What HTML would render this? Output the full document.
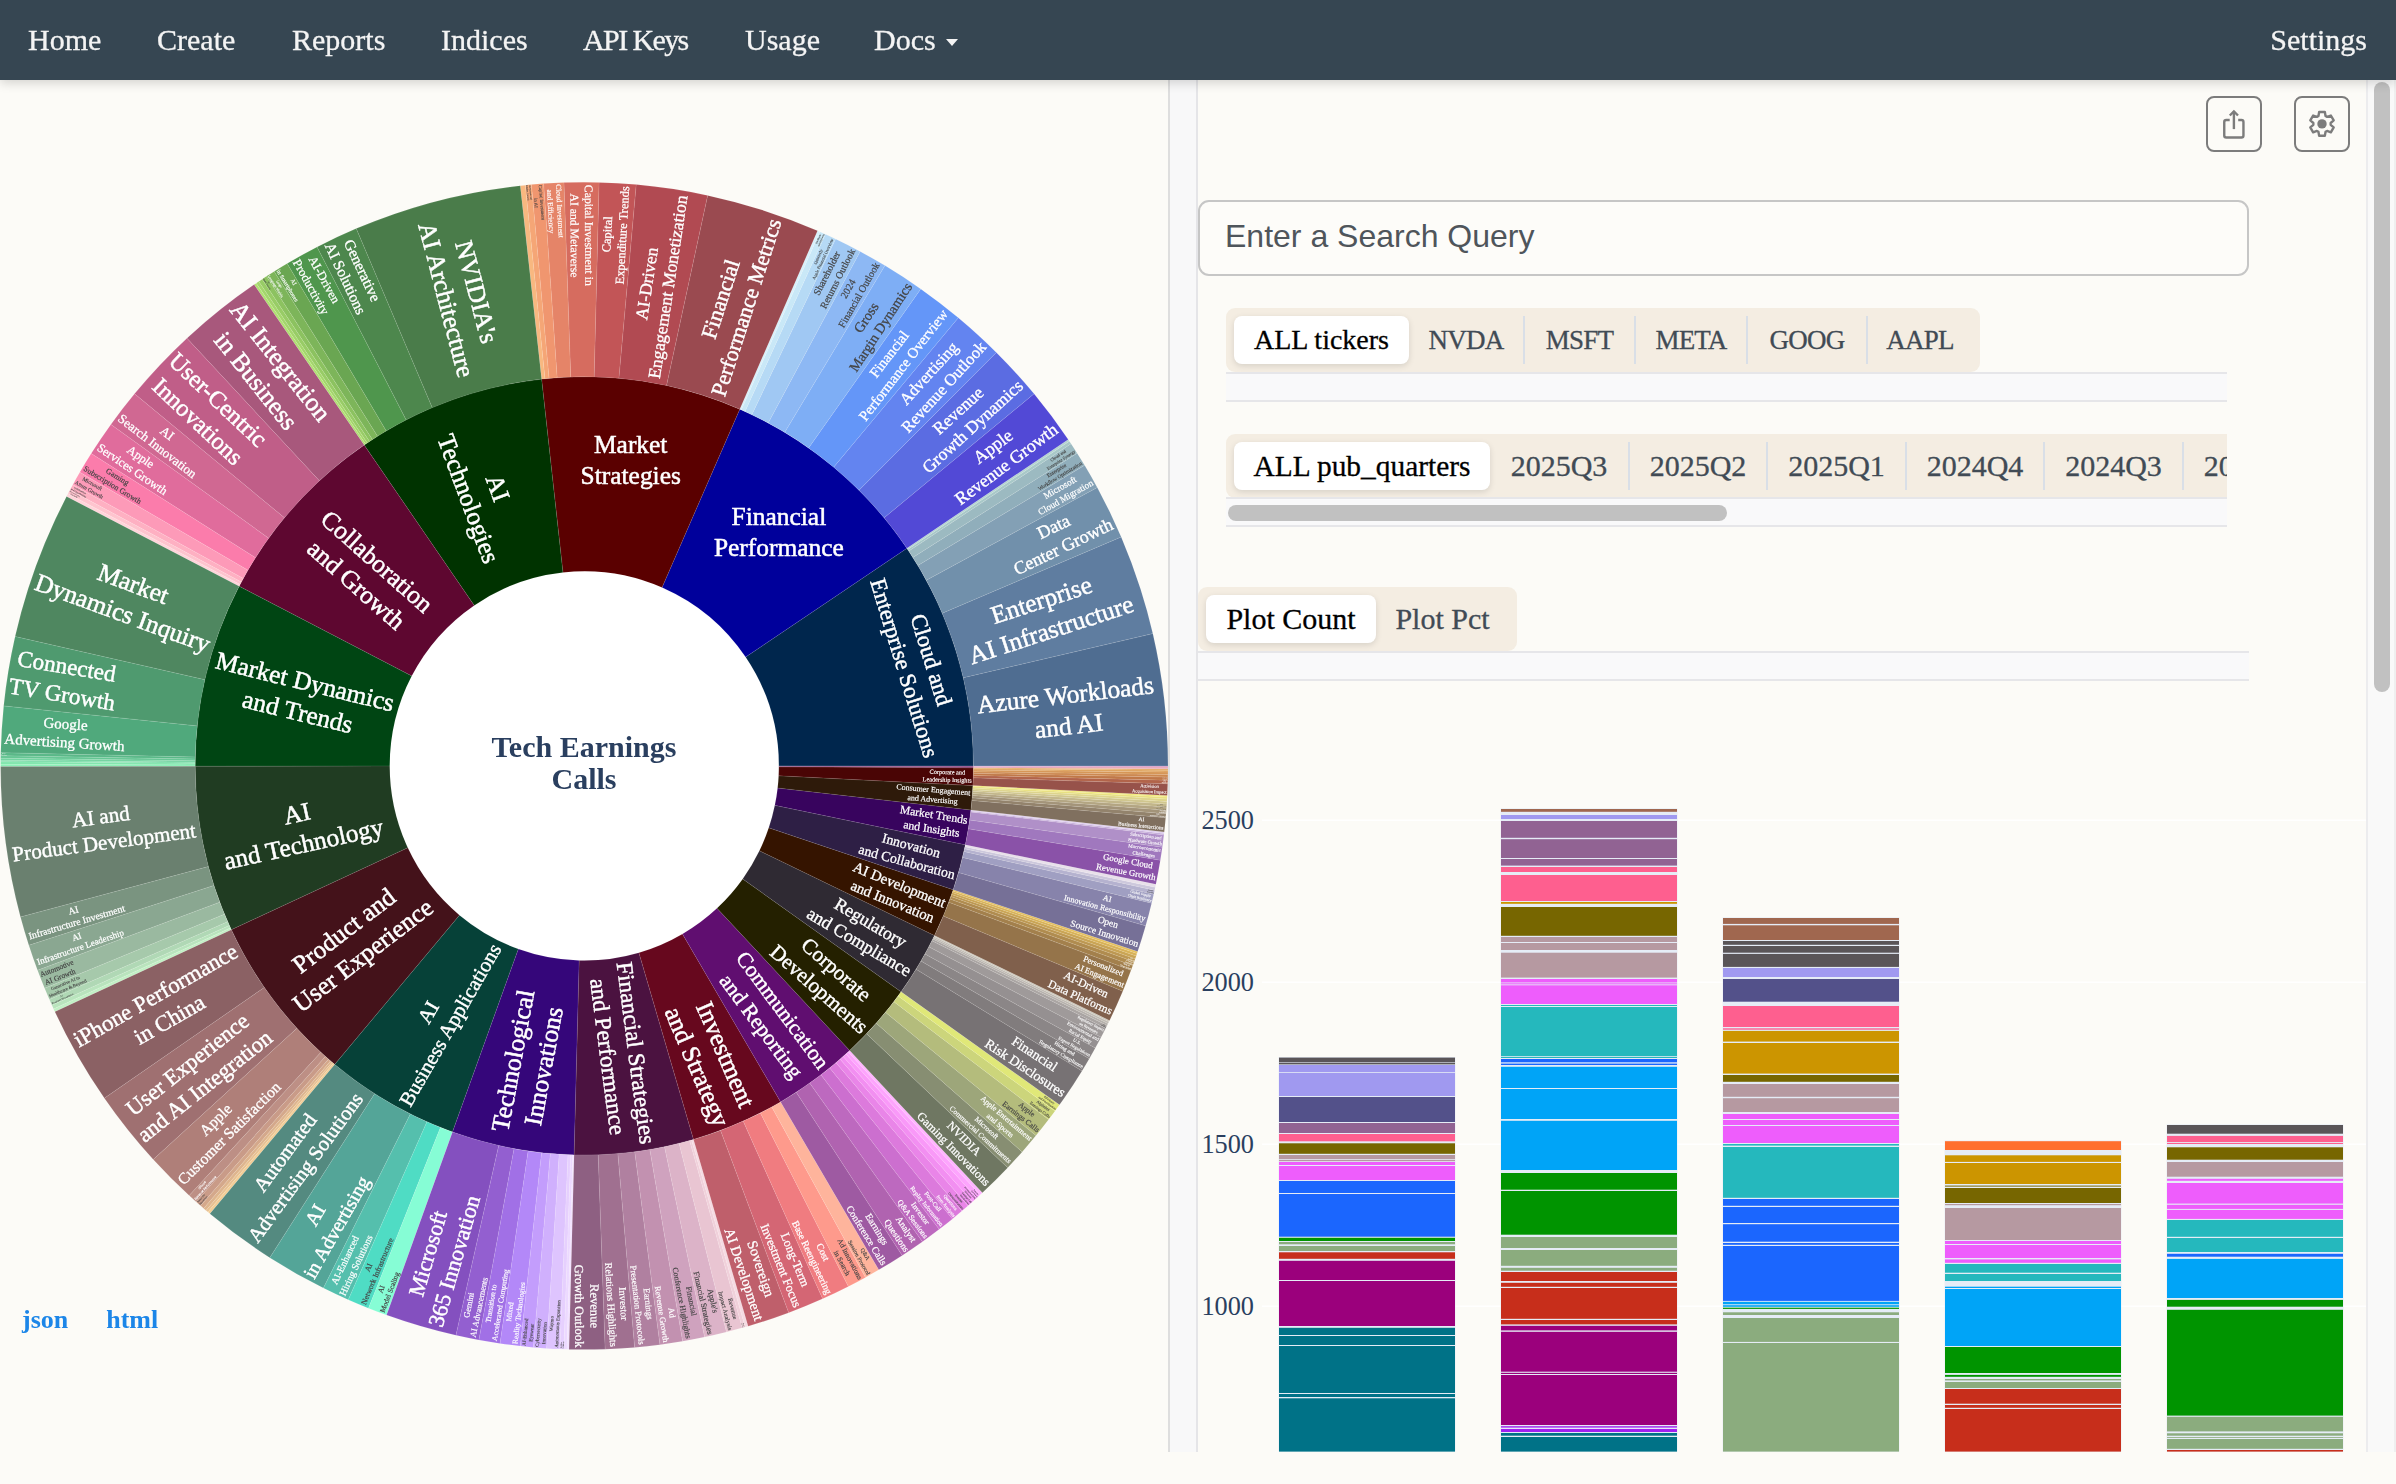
<!DOCTYPE html>
<html lang="en">
<head>
<meta charset="utf-8">
<title>Tech Earnings Calls</title>
<style>
*{box-sizing:border-box}
html,body{margin:0;padding:0}
body{width:2396px;height:1484px;overflow:hidden;background:#fcfbf7;font-family:"Liberation Serif",serif;position:relative;color:#111}
.nav{position:absolute;left:0;top:0;width:2396px;height:80px;background:#364652;box-shadow:0 3px 10px rgba(0,0,0,.16);z-index:5}
.nav a{-webkit-text-stroke:0.3px #f4f4f4;position:absolute;top:0;line-height:80px;font-size:30px;color:#f4f4f4;text-decoration:none;white-space:nowrap}
.caret{position:absolute;left:946px;top:39px;width:0;height:0;border-left:6.5px solid transparent;border-right:6.5px solid transparent;border-top:7px solid #f4f4f4}
.main{position:absolute;left:0;top:80px;width:2396px;height:1372px;overflow:hidden}
.sun{position:absolute;left:0;top:0;will-change:transform}
.vl{position:absolute;top:0;height:1372px}
.links{position:absolute;left:22px;top:1224.5px;font-size:26px;font-weight:bold}
.links span{color:#1c86e8;margin-right:38px}
.btn{position:absolute;top:16px;width:56px;height:56px;border:2px solid #7c7c7c;border-radius:8px;background:#fcfbf7}
.btn svg{position:absolute;left:0;top:0}
.search{position:absolute;left:1198px;top:120px;width:1051px;height:76px;border:2px solid #c6c6c6;border-radius:11px;background:#fdfcf9;font-family:"Liberation Sans",sans-serif;font-size:32px;color:#4f555b;line-height:68px;padding-left:25px}
.tabs{position:absolute;height:64px;background:#f4ede2;border-radius:9px 9px 9px 9px;overflow:hidden;white-space:nowrap}
.tab{-webkit-text-stroke:0.3px;position:absolute;top:8px;height:48px;line-height:48px;font-size:28px;color:#414b55;text-align:center}
.tab.sel{background:#fff;border-radius:8px;color:#000;box-shadow:0 2px 6px rgba(0,0,0,.12)}
.tab.sep{border-left:2px solid #d9dfe7}
.hl{position:absolute;height:2px;background:#e6e6e9}
.band{position:absolute;background:#f9f9fa}
.bars{position:absolute;left:1198px;top:672px}
.thumb{position:absolute;background:#c1c1c1;border-radius:8px}
</style>
</head>
<body>
<div class="nav">
  <a style="left:28px">Home</a>
  <a style="left:157px">Create</a>
  <a style="left:292px">Reports</a>
  <a style="left:441px">Indices</a>
  <a style="left:583px;letter-spacing:-1.6px">API Keys</a>
  <a style="left:745px">Usage</a>
  <a style="left:874px">Docs</a><i class="caret"></i>
  <a style="right:29px">Settings</a>
</div>
<div class="main">
<svg class="sun" width="1180" height="1372" viewBox="0 80 1180 1372">
<circle cx="584.3" cy="765.9" r="195.07" fill="#ffffff"/>
<g stroke="#ffffff" stroke-opacity="0.16" stroke-width="0.5"><path d="M973.43,765.90A389.13,389.13 0 0 0 906.91,548.30L745.60,657.10A194.57,194.57 0 0 1 778.87,765.90Z" fill="#00264d"/><path d="M1168.00,765.90A583.70,583.70 0 0 0 1152.81,633.60L963.31,677.70A389.13,389.13 0 0 1 973.43,765.90Z" fill="#4f6d91"/><path d="M1152.81,633.60A583.70,583.70 0 0 0 1121.20,536.89L942.23,613.23A389.13,389.13 0 0 1 963.31,677.70Z" fill="#5f7da0"/><path d="M1121.20,536.89A583.70,583.70 0 0 0 1097.27,487.38L926.28,580.22A389.13,389.13 0 0 1 942.23,613.23Z" fill="#7190ab"/><path d="M1097.27,487.38A583.70,583.70 0 0 0 1084.63,465.27L917.85,565.48A389.13,389.13 0 0 1 926.28,580.22Z" fill="#83a0b5"/><path d="M1084.63,465.27A583.70,583.70 0 0 0 1077.13,453.14L912.86,557.39A389.13,389.13 0 0 1 917.85,565.48Z" fill="#90aebb"/><path d="M1077.13,453.14A583.70,583.70 0 0 0 1071.04,443.73L908.79,551.12A389.13,389.13 0 0 1 912.86,557.39Z" fill="#9cbac1"/><path d="M1071.04,443.73A583.70,583.70 0 0 0 1069.35,441.19L907.66,549.43A389.13,389.13 0 0 1 908.79,551.12Z" fill="#a8c8c8"/><path d="M1069.35,441.19A583.70,583.70 0 0 0 1068.21,439.50L906.91,548.30A389.13,389.13 0 0 1 907.66,549.43Z" fill="#b5d5d0"/><path d="M906.91,548.30A389.13,389.13 0 0 0 739.78,409.18L662.04,587.54A194.57,194.57 0 0 1 745.60,657.10Z" fill="#00009b"/><path d="M1068.21,439.50A583.70,583.70 0 0 0 1034.05,393.84L884.13,517.86A389.13,389.13 0 0 1 906.91,548.30Z" fill="#5249d6"/><path d="M1034.05,393.84A583.70,583.70 0 0 0 996.32,352.44L858.98,490.26A389.13,389.13 0 0 1 884.13,517.86Z" fill="#5b6ce2"/><path d="M996.32,352.44A583.70,583.70 0 0 0 958.32,317.78L833.65,467.15A389.13,389.13 0 0 1 858.98,490.26Z" fill="#6384f0"/><path d="M958.32,317.78A583.70,583.70 0 0 0 920.76,288.93L808.61,447.92A389.13,389.13 0 0 1 833.65,467.15Z" fill="#6496f8"/><path d="M920.76,288.93A583.70,583.70 0 0 0 884.93,265.57L784.72,432.35A389.13,389.13 0 0 1 808.61,447.92Z" fill="#7eaef5"/><path d="M884.93,265.57A583.70,583.70 0 0 0 860.13,251.48L768.19,422.96A389.13,389.13 0 0 1 784.72,432.35Z" fill="#8db8f4"/><path d="M860.13,251.48A583.70,583.70 0 0 0 835.59,239.06L751.83,414.67A389.13,389.13 0 0 1 768.19,422.96Z" fill="#a0c8f3"/><path d="M835.59,239.06A583.70,583.70 0 0 0 825.43,234.33L745.05,411.52A389.13,389.13 0 0 1 751.83,414.67Z" fill="#b6daf5"/><path d="M825.43,234.33A583.70,583.70 0 0 0 819.85,231.84L741.33,409.86A389.13,389.13 0 0 1 745.05,411.52Z" fill="#c9e8f7"/><path d="M819.85,231.84A583.70,583.70 0 0 0 817.52,230.82L739.78,409.18A389.13,389.13 0 0 1 741.33,409.86Z" fill="#d8f0fa"/><path d="M739.78,409.18A389.13,389.13 0 0 0 541.60,379.12L562.95,572.51A194.57,194.57 0 0 1 662.04,587.54Z" fill="#5a0000"/><path d="M817.52,230.82A583.70,583.70 0 0 0 707.65,195.38L666.53,385.55A389.13,389.13 0 0 1 739.78,409.18Z" fill="#9a4a50"/><path d="M707.65,195.38A583.70,583.70 0 0 0 636.19,184.51L618.89,378.31A389.13,389.13 0 0 1 666.53,385.55Z" fill="#b14a52"/><path d="M636.19,184.51A583.70,583.70 0 0 0 599.07,182.39L594.15,376.89A389.13,389.13 0 0 1 618.89,378.31Z" fill="#c25557"/><path d="M599.07,182.39A583.70,583.70 0 0 0 563.93,182.56L570.72,377.00A389.13,389.13 0 0 1 594.15,376.89Z" fill="#d66c5f"/><path d="M563.93,182.56A583.70,583.70 0 0 0 543.58,183.62L557.16,377.71A389.13,389.13 0 0 1 570.72,377.00Z" fill="#e58468"/><path d="M543.58,183.62A583.70,583.70 0 0 0 531.40,184.60L549.03,378.37A389.13,389.13 0 0 1 557.16,377.71Z" fill="#f0966f"/><path d="M531.40,184.60A583.70,583.70 0 0 0 525.31,185.19L544.98,378.76A389.13,389.13 0 0 1 549.03,378.37Z" fill="#f5a676"/><path d="M525.31,185.19A583.70,583.70 0 0 0 520.25,185.72L541.60,379.12A389.13,389.13 0 0 1 544.98,378.76Z" fill="#f8b880"/><path d="M541.60,379.12A389.13,389.13 0 0 0 364.17,445.01L474.24,605.46A194.57,194.57 0 0 1 562.95,572.51Z" fill="#003300"/><path d="M520.25,185.72A583.70,583.70 0 0 0 356.23,228.60L432.25,407.70A389.13,389.13 0 0 1 541.60,379.12Z" fill="#4a7c4a"/><path d="M356.23,228.60A583.70,583.70 0 0 0 317.04,246.98L406.13,419.95A389.13,389.13 0 0 1 432.25,407.70Z" fill="#4d874d"/><path d="M317.04,246.98A583.70,583.70 0 0 0 287.17,263.48L386.22,430.96A389.13,389.13 0 0 1 406.13,419.95Z" fill="#4f964d"/><path d="M287.17,263.48A583.70,583.70 0 0 0 274.12,271.43L377.52,436.26A389.13,389.13 0 0 1 386.22,430.96Z" fill="#6aa652"/><path d="M274.12,271.43A583.70,583.70 0 0 0 266.39,276.37L372.36,439.55A389.13,389.13 0 0 1 377.52,436.26Z" fill="#7db55a"/><path d="M266.39,276.37A583.70,583.70 0 0 0 262.13,279.16L369.52,441.41A389.13,389.13 0 0 1 372.36,439.55Z" fill="#8cc260"/><path d="M262.13,279.16A583.70,583.70 0 0 0 258.74,281.42L367.26,442.91A389.13,389.13 0 0 1 369.52,441.41Z" fill="#98cc66"/><path d="M258.74,281.42A583.70,583.70 0 0 0 256.21,283.13L365.57,444.06A389.13,389.13 0 0 1 367.26,442.91Z" fill="#a4d66c"/><path d="M256.21,283.13A583.70,583.70 0 0 0 254.11,284.57L364.17,445.01A389.13,389.13 0 0 1 365.57,444.06Z" fill="#b0e072"/><path d="M364.17,445.01A389.13,389.13 0 0 0 239.13,586.22L411.72,676.06A194.57,194.57 0 0 1 474.24,605.46Z" fill="#5e0730"/><path d="M254.11,284.57A583.70,583.70 0 0 0 186.96,338.31L319.41,480.84A389.13,389.13 0 0 1 364.17,445.01Z" fill="#a8587c"/><path d="M186.96,338.31A583.70,583.70 0 0 0 134.55,393.84L284.47,517.86A389.13,389.13 0 0 1 319.41,480.84Z" fill="#c05e88"/><path d="M134.55,393.84A583.70,583.70 0 0 0 110.88,424.46L268.69,538.27A389.13,389.13 0 0 1 284.47,517.86Z" fill="#d06892"/><path d="M110.88,424.46A583.70,583.70 0 0 0 91.19,453.57L255.56,557.68A389.13,389.13 0 0 1 268.69,538.27Z" fill="#e06c9c"/><path d="M91.19,453.57A583.70,583.70 0 0 0 79.82,472.29L247.98,570.16A389.13,389.13 0 0 1 255.56,557.68Z" fill="#fb7cab"/><path d="M79.82,472.29A583.70,583.70 0 0 0 72.80,484.70L243.30,578.43A389.13,389.13 0 0 1 247.98,570.16Z" fill="#fd9ab8"/><path d="M72.80,484.70A583.70,583.70 0 0 0 69.88,490.07L241.36,582.01A389.13,389.13 0 0 1 243.30,578.43Z" fill="#feb0c2"/><path d="M69.88,490.07A583.70,583.70 0 0 0 67.97,493.67L240.08,584.41A389.13,389.13 0 0 1 241.36,582.01Z" fill="#fec4ce"/><path d="M67.97,493.67A583.70,583.70 0 0 0 66.55,496.38L239.13,586.22A389.13,389.13 0 0 1 240.08,584.41Z" fill="#ffd4da"/><path d="M239.13,586.22A389.13,389.13 0 0 0 195.17,766.24L389.73,766.07A194.57,194.57 0 0 1 411.72,676.06Z" fill="#004513"/><path d="M66.55,496.38A583.70,583.70 0 0 0 15.11,636.58L204.84,679.69A389.13,389.13 0 0 1 239.13,586.22Z" fill="#4f8760"/><path d="M15.11,636.58A583.70,583.70 0 0 0 3.69,705.90L197.23,725.90A389.13,389.13 0 0 1 204.84,679.69Z" fill="#4f9a6f"/><path d="M3.69,705.90A583.70,583.70 0 0 0 0.75,752.66L195.27,757.07A389.13,389.13 0 0 1 197.23,725.90Z" fill="#50a97c"/><path d="M0.75,752.66A583.70,583.70 0 0 0 0.69,755.71L195.23,759.11A389.13,389.13 0 0 1 195.27,757.07Z" fill="#5ab888"/><path d="M0.69,755.71A583.70,583.70 0 0 0 0.65,758.26L195.20,760.81A389.13,389.13 0 0 1 195.23,759.11Z" fill="#66c694"/><path d="M0.65,758.26A583.70,583.70 0 0 0 0.63,760.30L195.18,762.16A389.13,389.13 0 0 1 195.20,760.81Z" fill="#72d4a0"/><path d="M0.63,760.30A583.70,583.70 0 0 0 0.61,761.83L195.18,763.18A389.13,389.13 0 0 1 195.18,762.16Z" fill="#7adca8"/><path d="M0.61,761.83A583.70,583.70 0 0 0 0.60,764.37L195.17,764.88A389.13,389.13 0 0 1 195.18,763.18Z" fill="#82e6ae"/><path d="M0.60,764.37A583.70,583.70 0 0 0 0.60,766.41L195.17,766.24A389.13,389.13 0 0 1 195.17,764.88Z" fill="#8af0b6"/><path d="M195.17,766.24A389.13,389.13 0 0 0 231.34,929.74L407.82,847.82A194.57,194.57 0 0 1 389.73,766.07Z" fill="#203c22"/><path d="M0.60,766.41A583.70,583.70 0 0 0 20.49,916.97L208.43,866.62A389.13,389.13 0 0 1 195.17,766.24Z" fill="#6a806f"/><path d="M20.49,916.97A583.70,583.70 0 0 0 28.85,945.30L214.00,885.50A389.13,389.13 0 0 1 208.43,866.62Z" fill="#7a9480"/><path d="M28.85,945.30A583.70,583.70 0 0 0 37.56,970.32L219.81,902.18A389.13,389.13 0 0 1 214.00,885.50Z" fill="#8aa791"/><path d="M37.56,970.32A583.70,583.70 0 0 0 44.64,988.33L224.53,914.19A389.13,389.13 0 0 1 219.81,902.18Z" fill="#9ab9a0"/><path d="M44.64,988.33A583.70,583.70 0 0 0 49.42,999.58L227.71,921.69A389.13,389.13 0 0 1 224.53,914.19Z" fill="#a6c9ab"/><path d="M49.42,999.58A583.70,583.70 0 0 0 51.90,1005.17L229.36,925.41A389.13,389.13 0 0 1 227.71,921.69Z" fill="#b0d8b5"/><path d="M51.90,1005.17A583.70,583.70 0 0 0 53.58,1008.88L230.49,927.89A389.13,389.13 0 0 1 229.36,925.41Z" fill="#b9e4bd"/><path d="M53.58,1008.88A583.70,583.70 0 0 0 54.86,1011.66L231.34,929.74A389.13,389.13 0 0 1 230.49,927.89Z" fill="#c2f0c5"/><path d="M231.34,929.74A389.13,389.13 0 0 0 334.69,1064.43L459.50,915.16A194.57,194.57 0 0 1 407.82,847.82Z" fill="#44121a"/><path d="M54.86,1011.66A583.70,583.70 0 0 0 104.41,1098.19L264.38,987.43A389.13,389.13 0 0 1 231.34,929.74Z" fill="#8b6164"/><path d="M104.41,1098.19A583.70,583.70 0 0 0 153.26,1159.49L296.94,1028.29A389.13,389.13 0 0 1 264.38,987.43Z" fill="#9f7071"/><path d="M153.26,1159.49A583.70,583.70 0 0 0 189.21,1195.56L320.90,1052.34A389.13,389.13 0 0 1 296.94,1028.29Z" fill="#af7f79"/><path d="M189.21,1195.56A583.70,583.70 0 0 0 196.01,1201.71L325.44,1056.44A389.13,389.13 0 0 1 320.90,1052.34Z" fill="#bd8f85"/><path d="M196.01,1201.71A583.70,583.70 0 0 0 200.59,1205.75L328.49,1059.14A389.13,389.13 0 0 1 325.44,1056.44Z" fill="#c99b88"/><path d="M200.59,1205.75A583.70,583.70 0 0 0 203.67,1208.42L330.55,1060.92A389.13,389.13 0 0 1 328.49,1059.14Z" fill="#d4a88b"/><path d="M203.67,1208.42A583.70,583.70 0 0 0 205.99,1210.41L332.09,1062.24A389.13,389.13 0 0 1 330.55,1060.92Z" fill="#deb58e"/><path d="M205.99,1210.41A583.70,583.70 0 0 0 207.94,1212.06L333.39,1063.34A389.13,389.13 0 0 1 332.09,1062.24Z" fill="#e8c192"/><path d="M207.94,1212.06A583.70,583.70 0 0 0 209.89,1213.69L334.69,1064.43A389.13,389.13 0 0 1 333.39,1063.34Z" fill="#f2cd96"/><path d="M334.69,1064.43A389.13,389.13 0 0 0 452.49,1132.03L518.39,948.96A194.57,194.57 0 0 1 459.50,915.16Z" fill="#064138"/><path d="M209.89,1213.69A583.70,583.70 0 0 0 269.82,1257.64L374.65,1093.73A389.13,389.13 0 0 1 334.69,1064.43Z" fill="#548a80"/><path d="M269.82,1257.64A583.70,583.70 0 0 0 323.40,1288.05L410.37,1114.00A389.13,389.13 0 0 1 374.65,1093.73Z" fill="#54a598"/><path d="M323.40,1288.05A583.70,583.70 0 0 0 348.28,1299.76L426.96,1121.80A389.13,389.13 0 0 1 410.37,1114.00Z" fill="#55bfad"/><path d="M348.28,1299.76A583.70,583.70 0 0 0 368.48,1308.23L440.42,1127.46A389.13,389.13 0 0 1 426.96,1121.80Z" fill="#4fdcc4"/><path d="M368.48,1308.23A583.70,583.70 0 0 0 386.58,1315.09L452.49,1132.03A389.13,389.13 0 0 1 440.42,1127.46Z" fill="#86fdd5"/><path d="M452.49,1132.03A389.13,389.13 0 0 0 574.11,1154.90L579.21,960.40A194.57,194.57 0 0 1 518.39,948.96Z" fill="#35067a"/><path d="M386.58,1315.09A583.70,583.70 0 0 0 455.98,1335.32L498.75,1145.51A389.13,389.13 0 0 1 452.49,1132.03Z" fill="#8450bf"/><path d="M455.98,1335.32A583.70,583.70 0 0 0 478.93,1340.01L514.05,1148.64A389.13,389.13 0 0 1 498.75,1145.51Z" fill="#935fd0"/><path d="M478.93,1340.01A583.70,583.70 0 0 0 500.04,1343.49L528.13,1150.96A389.13,389.13 0 0 1 514.05,1148.64Z" fill="#a170e6"/><path d="M500.04,1343.49A583.70,583.70 0 0 0 520.25,1346.08L541.60,1152.68A389.13,389.13 0 0 1 528.13,1150.96Z" fill="#b388f8"/><path d="M520.25,1346.08A583.70,583.70 0 0 0 533.43,1347.38L550.38,1153.55A389.13,389.13 0 0 1 541.60,1152.68Z" fill="#c39dfc"/><path d="M533.43,1347.38A583.70,583.70 0 0 0 546.63,1348.38L559.19,1154.22A389.13,389.13 0 0 1 550.38,1153.55Z" fill="#d0b0fd"/><path d="M546.63,1348.38A583.70,583.70 0 0 0 559.86,1349.09L568.00,1154.69A389.13,389.13 0 0 1 559.19,1154.22Z" fill="#dec4fe"/><path d="M559.86,1349.09A583.70,583.70 0 0 0 563.93,1349.24L570.72,1154.80A389.13,389.13 0 0 1 568.00,1154.69Z" fill="#e6d0fe"/><path d="M563.93,1349.24A583.70,583.70 0 0 0 566.98,1349.34L572.76,1154.86A389.13,389.13 0 0 1 570.72,1154.80Z" fill="#ecd9ff"/><path d="M566.98,1349.34A583.70,583.70 0 0 0 569.02,1349.40L574.11,1154.90A389.13,389.13 0 0 1 572.76,1154.86Z" fill="#f2e2ff"/><path d="M574.11,1154.90A389.13,389.13 0 0 0 693.52,1139.39L638.91,952.65A194.57,194.57 0 0 1 579.21,960.40Z" fill="#4b1240"/><path d="M569.02,1349.40A583.70,583.70 0 0 0 605.18,1349.23L598.22,1154.78A389.13,389.13 0 0 1 574.11,1154.90Z" fill="#8e6082"/><path d="M605.18,1349.23A583.70,583.70 0 0 0 634.67,1347.42L617.88,1153.58A389.13,389.13 0 0 1 598.22,1154.78Z" fill="#a07090"/><path d="M634.67,1347.42A583.70,583.70 0 0 0 659.98,1344.67L634.76,1151.75A389.13,389.13 0 0 1 617.88,1153.58Z" fill="#b080a0"/><path d="M659.98,1344.67A583.70,583.70 0 0 0 682.65,1341.26L649.86,1149.47A389.13,389.13 0 0 1 634.76,1151.75Z" fill="#c291b0"/><path d="M682.65,1341.26A583.70,583.70 0 0 0 704.66,1337.06L664.54,1146.67A389.13,389.13 0 0 1 649.86,1149.47Z" fill="#cfa2be"/><path d="M704.66,1337.06A583.70,583.70 0 0 0 726.50,1332.01L679.10,1143.31A389.13,389.13 0 0 1 664.54,1146.67Z" fill="#dcb3c8"/><path d="M726.50,1332.01A583.70,583.70 0 0 0 742.25,1327.82L689.60,1140.52A389.13,389.13 0 0 1 679.10,1143.31Z" fill="#e9c5d2"/><path d="M742.25,1327.82A583.70,583.70 0 0 0 745.19,1326.99L691.56,1139.96A389.13,389.13 0 0 1 689.60,1140.52Z" fill="#f0d0da"/><path d="M745.19,1326.99A583.70,583.70 0 0 0 748.13,1326.14L693.52,1139.39A389.13,389.13 0 0 1 691.56,1139.96Z" fill="#f5dae2"/><path d="M693.52,1139.39A389.13,389.13 0 0 0 780.63,1101.88L682.46,933.89A194.57,194.57 0 0 1 638.91,952.65Z" fill="#67081e"/><path d="M748.13,1326.14A583.70,583.70 0 0 0 788.72,1312.64L720.58,1130.39A389.13,389.13 0 0 1 693.52,1139.39Z" fill="#bf5f6b"/><path d="M788.72,1312.64A583.70,583.70 0 0 0 822.64,1298.72L743.19,1121.11A389.13,389.13 0 0 1 720.58,1130.39Z" fill="#d46674"/><path d="M822.64,1298.72A583.70,583.70 0 0 0 848.39,1286.44L760.36,1112.93A389.13,389.13 0 0 1 743.19,1121.11Z" fill="#f07c80"/><path d="M848.39,1286.44A583.70,583.70 0 0 0 865.50,1277.40L771.77,1106.90A389.13,389.13 0 0 1 760.36,1112.93Z" fill="#fe9a8c"/><path d="M865.50,1277.40A583.70,583.70 0 0 0 878.79,1269.86L780.63,1101.88A389.13,389.13 0 0 1 771.77,1106.90Z" fill="#feb49c"/><path d="M780.63,1101.88A389.13,389.13 0 0 0 849.69,1050.49L716.99,908.20A194.57,194.57 0 0 1 682.46,933.89Z" fill="#600e70"/><path d="M878.79,1269.86A583.70,583.70 0 0 0 902.21,1255.43L796.24,1092.25A389.13,389.13 0 0 1 780.63,1101.88Z" fill="#9e5aa2"/><path d="M902.21,1255.43A583.70,583.70 0 0 0 922.43,1241.69L809.72,1083.09A389.13,389.13 0 0 1 796.24,1092.25Z" fill="#b063b0"/><path d="M922.43,1241.69A583.70,583.70 0 0 0 939.23,1229.29L820.92,1074.83A389.13,389.13 0 0 1 809.72,1083.09Z" fill="#bd69bf"/><path d="M939.23,1229.29A583.70,583.70 0 0 0 952.43,1218.88L829.72,1067.89A389.13,389.13 0 0 1 820.92,1074.83Z" fill="#cc6fcf"/><path d="M952.43,1218.88A583.70,583.70 0 0 0 961.83,1211.07L835.99,1062.68A389.13,389.13 0 0 1 829.72,1067.89Z" fill="#dc7adc"/><path d="M961.83,1211.07A583.70,583.70 0 0 0 968.01,1205.75L840.11,1059.14A389.13,389.13 0 0 1 835.99,1062.68Z" fill="#e985e8"/><path d="M968.01,1205.75A583.70,583.70 0 0 0 972.59,1201.71L843.16,1056.44A389.13,389.13 0 0 1 840.11,1059.14Z" fill="#f28ff1"/><path d="M972.59,1201.71A583.70,583.70 0 0 0 976.76,1197.97L845.94,1053.94A389.13,389.13 0 0 1 843.16,1056.44Z" fill="#f999f8"/><path d="M976.76,1197.97A583.70,583.70 0 0 0 980.14,1194.87L848.19,1051.88A389.13,389.13 0 0 1 845.94,1053.94Z" fill="#fda4fd"/><path d="M980.14,1194.87A583.70,583.70 0 0 0 982.38,1192.79L849.69,1050.49A389.13,389.13 0 0 1 848.19,1051.88Z" fill="#ffb4ff"/><path d="M849.69,1050.49A389.13,389.13 0 0 0 901.10,991.87L742.70,878.89A194.57,194.57 0 0 1 716.99,908.20Z" fill="#242000"/><path d="M982.38,1192.79A583.70,583.70 0 0 0 1007.70,1167.69L866.57,1033.76A389.13,389.13 0 0 1 849.69,1050.49Z" fill="#6f7762"/><path d="M1007.70,1167.69A583.70,583.70 0 0 0 1022.14,1151.91L876.19,1023.24A389.13,389.13 0 0 1 866.57,1033.76Z" fill="#878e72"/><path d="M1022.14,1151.91A583.70,583.70 0 0 0 1035.99,1135.60L885.43,1012.37A389.13,389.13 0 0 1 876.19,1023.24Z" fill="#9da67a"/><path d="M1035.99,1135.60A583.70,583.70 0 0 0 1048.62,1119.62L893.85,1001.71A389.13,389.13 0 0 1 885.43,1012.37Z" fill="#b4bc7c"/><path d="M1048.62,1119.62A583.70,583.70 0 0 0 1055.02,1111.05L898.11,996.00A389.13,389.13 0 0 1 893.85,1001.71Z" fill="#ccd57b"/><path d="M1055.02,1111.05A583.70,583.70 0 0 0 1059.50,1104.86L901.10,991.87A389.13,389.13 0 0 1 898.11,996.00Z" fill="#e0e878"/><path d="M901.10,991.87A389.13,389.13 0 0 0 934.50,935.57L759.40,850.73A194.57,194.57 0 0 1 742.70,878.89Z" fill="#2f2a33"/><path d="M1059.50,1104.86A583.70,583.70 0 0 0 1081.99,1070.88L916.09,969.22A389.13,389.13 0 0 1 901.10,991.87Z" fill="#777274"/><path d="M1081.99,1070.88A583.70,583.70 0 0 0 1089.29,1058.63L920.96,961.05A389.13,389.13 0 0 1 916.09,969.22Z" fill="#817c7d"/><path d="M1089.29,1058.63A583.70,583.70 0 0 0 1095.31,1047.99L924.97,953.96A389.13,389.13 0 0 1 920.96,961.05Z" fill="#8b8687"/><path d="M1095.31,1047.99A583.70,583.70 0 0 0 1101.10,1037.23L928.84,946.79A389.13,389.13 0 0 1 924.97,953.96Z" fill="#959091"/><path d="M1101.10,1037.23A583.70,583.70 0 0 0 1105.76,1028.17L931.94,940.74A389.13,389.13 0 0 1 928.84,946.79Z" fill="#9f9a9a"/><path d="M1105.76,1028.17A583.70,583.70 0 0 0 1107.13,1025.43L932.85,938.92A389.13,389.13 0 0 1 931.94,940.74Z" fill="#aaa5a3"/><path d="M1107.13,1025.43A583.70,583.70 0 0 0 1108.03,1023.61L933.45,937.70A389.13,389.13 0 0 1 932.85,938.92Z" fill="#b5b0ab"/><path d="M1108.03,1023.61A583.70,583.70 0 0 0 1108.93,1021.78L934.05,936.48A389.13,389.13 0 0 1 933.45,937.70Z" fill="#c0bbb3"/><path d="M1108.93,1021.78A583.70,583.70 0 0 0 1109.59,1020.40L934.50,935.57A389.13,389.13 0 0 1 934.05,936.48Z" fill="#ccc8bc"/><path d="M934.50,935.57A389.13,389.13 0 0 0 953.22,889.70L768.76,827.80A194.57,194.57 0 0 1 759.40,850.73Z" fill="#351400"/><path d="M1109.59,1020.40A583.70,583.70 0 0 0 1122.79,991.15L943.29,916.07A389.13,389.13 0 0 1 934.50,935.57Z" fill="#80604c"/><path d="M1122.79,991.15A583.70,583.70 0 0 0 1131.04,970.32L948.79,902.18A389.13,389.13 0 0 1 943.29,916.07Z" fill="#95744a"/><path d="M1131.04,970.32A583.70,583.70 0 0 0 1132.80,965.54L949.97,898.99A389.13,389.13 0 0 1 948.79,902.18Z" fill="#a3804c"/><path d="M1132.80,965.54A583.70,583.70 0 0 0 1134.18,961.70L950.89,896.44A389.13,389.13 0 0 1 949.97,898.99Z" fill="#b08c4f"/><path d="M1134.18,961.70A583.70,583.70 0 0 0 1135.20,958.82L951.56,894.51A389.13,389.13 0 0 1 950.89,896.44Z" fill="#bd9852"/><path d="M1135.20,958.82A583.70,583.70 0 0 0 1136.20,955.93L952.23,892.59A389.13,389.13 0 0 1 951.56,894.51Z" fill="#caa555"/><path d="M1136.20,955.93A583.70,583.70 0 0 0 1137.02,953.52L952.78,890.98A389.13,389.13 0 0 1 952.23,892.59Z" fill="#d8b258"/><path d="M1137.02,953.52A583.70,583.70 0 0 0 1137.67,951.59L953.22,889.70A389.13,389.13 0 0 1 952.78,890.98Z" fill="#e6c05c"/><path d="M953.22,889.70A389.13,389.13 0 0 0 965.35,844.81L774.82,805.36A194.57,194.57 0 0 1 768.76,827.80Z" fill="#2e1f45"/><path d="M1137.67,951.59A583.70,583.70 0 0 0 1145.67,925.81L958.55,872.51A389.13,389.13 0 0 1 953.22,889.70Z" fill="#767097"/><path d="M1145.67,925.81A583.70,583.70 0 0 0 1151.63,903.15L962.52,857.40A389.13,389.13 0 0 1 958.55,872.51Z" fill="#8783ab"/><path d="M1151.63,903.15A583.70,583.70 0 0 0 1153.72,894.22L963.91,851.45A389.13,389.13 0 0 1 962.52,857.40Z" fill="#a09fc2"/><path d="M1153.72,894.22A583.70,583.70 0 0 0 1154.60,890.25L964.50,848.80A389.13,389.13 0 0 1 963.91,851.45Z" fill="#b5b2cf"/><path d="M1154.60,890.25A583.70,583.70 0 0 0 1155.24,887.26L964.93,846.81A389.13,389.13 0 0 1 964.50,848.80Z" fill="#cdc8dc"/><path d="M1155.24,887.26A583.70,583.70 0 0 0 1155.87,884.27L965.35,844.81A389.13,389.13 0 0 1 964.93,846.81Z" fill="#e8e0ea"/><path d="M965.35,844.81A389.13,389.13 0 0 0 970.93,809.95L777.62,787.93A194.57,194.57 0 0 1 774.82,805.36Z" fill="#38045e"/><path d="M1155.87,884.27A583.70,583.70 0 0 0 1160.33,860.23L968.32,828.79A389.13,389.13 0 0 1 965.35,844.81Z" fill="#8a52a8"/><path d="M1160.33,860.23A583.70,583.70 0 0 0 1162.32,847.14L969.65,820.06A389.13,389.13 0 0 1 968.32,828.79Z" fill="#a078be"/><path d="M1162.32,847.14A583.70,583.70 0 0 0 1163.89,835.01L970.70,811.97A389.13,389.13 0 0 1 969.65,820.06Z" fill="#b090c8"/><path d="M1163.89,835.01A583.70,583.70 0 0 0 1164.07,833.49L970.82,810.96A389.13,389.13 0 0 1 970.70,811.97Z" fill="#c8b0dc"/><path d="M1164.07,833.49A583.70,583.70 0 0 0 1164.25,831.98L970.93,809.95A389.13,389.13 0 0 1 970.82,810.96Z" fill="#e0d0f0"/><path d="M970.93,809.95A389.13,389.13 0 0 0 972.93,785.59L778.62,775.74A194.57,194.57 0 0 1 777.62,787.93Z" fill="#2e1a0a"/><path d="M1164.25,831.98A583.70,583.70 0 0 0 1165.69,817.79L971.89,800.49A389.13,389.13 0 0 1 970.93,809.95Z" fill="#80705f"/><path d="M1165.69,817.79A583.70,583.70 0 0 0 1166.04,813.73L972.12,797.79A389.13,389.13 0 0 1 971.89,800.49Z" fill="#93836c"/><path d="M1166.04,813.73A583.70,583.70 0 0 0 1166.32,810.17L972.31,795.42A389.13,389.13 0 0 1 972.12,797.79Z" fill="#a39479"/><path d="M1166.32,810.17A583.70,583.70 0 0 0 1166.54,807.12L972.46,793.38A389.13,389.13 0 0 1 972.31,795.42Z" fill="#b3a582"/><path d="M1166.54,807.12A583.70,583.70 0 0 0 1166.75,804.08L972.60,791.35A389.13,389.13 0 0 1 972.46,793.38Z" fill="#c2b68a"/><path d="M1166.75,804.08A583.70,583.70 0 0 0 1166.91,801.53L972.71,789.66A389.13,389.13 0 0 1 972.60,791.35Z" fill="#d0c68e"/><path d="M1166.91,801.53A583.70,583.70 0 0 0 1167.06,798.99L972.81,787.96A389.13,389.13 0 0 1 972.71,789.66Z" fill="#ddd48c"/><path d="M1167.06,798.99A583.70,583.70 0 0 0 1167.17,796.96L972.88,786.60A389.13,389.13 0 0 1 972.81,787.96Z" fill="#e8e080"/><path d="M1167.17,796.96A583.70,583.70 0 0 0 1167.25,795.43L972.93,785.59A389.13,389.13 0 0 1 972.88,786.60Z" fill="#f2ea78"/><path d="M972.93,785.59A389.13,389.13 0 0 0 973.43,767.80L778.86,766.85A194.57,194.57 0 0 1 778.62,775.74Z" fill="#4a0505"/><path d="M1167.25,795.43A583.70,583.70 0 0 0 1167.73,783.73L973.25,777.78A389.13,389.13 0 0 1 972.93,785.59Z" fill="#97524a"/><path d="M1167.73,783.73A583.70,583.70 0 0 0 1167.83,780.16L973.32,775.41A389.13,389.13 0 0 1 973.25,777.78Z" fill="#b2644a"/><path d="M1167.83,780.16A583.70,583.70 0 0 0 1167.89,777.11L973.36,773.37A389.13,389.13 0 0 1 973.32,775.41Z" fill="#c07848"/><path d="M1167.89,777.11A583.70,583.70 0 0 0 1167.94,774.56L973.39,771.67A389.13,389.13 0 0 1 973.36,773.37Z" fill="#cc8850"/><path d="M1167.94,774.56A583.70,583.70 0 0 0 1167.97,772.01L973.41,769.97A389.13,389.13 0 0 1 973.39,771.67Z" fill="#d69656"/><path d="M1167.97,772.01A583.70,583.70 0 0 0 1167.98,770.18L973.42,768.75A389.13,389.13 0 0 1 973.41,769.97Z" fill="#dea25c"/><path d="M1167.98,770.18A583.70,583.70 0 0 0 1167.99,768.75L973.43,767.80A389.13,389.13 0 0 1 973.42,768.75Z" fill="#e6ae64"/><path d="M973.43,767.80A389.13,389.13 0 0 0 973.43,766.71L778.87,766.31A194.57,194.57 0 0 1 778.86,766.85Z" fill="#6b1650"/><path d="M1167.99,768.75A583.70,583.70 0 0 0 1168.00,767.12L973.43,766.71A389.13,389.13 0 0 1 973.43,767.80Z" fill="#e6a2b6"/><path d="M973.43,766.71A389.13,389.13 0 0 0 973.43,765.90L778.87,765.90A194.57,194.57 0 0 1 778.87,766.31Z" fill="#7a2a78"/><path d="M1168.00,767.12A583.70,583.70 0 0 0 1168.00,765.90L973.43,765.90A389.13,389.13 0 0 1 973.43,766.71Z" fill="#d8a4cc"/></g>
<g font-family="'Liberation Serif', serif" text-anchor="middle"><text transform="translate(917.79,663.94) rotate(73.00)" font-size="22.85" fill="#ffffff" stroke="#ffffff" stroke-width="0.46"><tspan x="0" y="-6.47">Cloud and</tspan><tspan x="0" y="21.55">Enterprise Solutions</tspan></text><text transform="translate(1067.10,710.47) rotate(-6.55)" font-size="25.44" fill="#ffffff" stroke="#ffffff" stroke-width="0.51"><tspan x="0" y="-7.20">Azure Workloads</tspan><tspan x="0" y="24.00">and AI</tspan></text><text transform="translate(1046.19,614.93) rotate(-18.10)" font-size="25.44" fill="#ffffff" stroke="#ffffff" stroke-width="0.51"><tspan x="0" y="-7.20">Enterprise</tspan><tspan x="0" y="24.00">AI Infrastructure</tspan></text><text transform="translate(1058.44,536.69) rotate(-25.80)" font-size="18.10" fill="#ffffff" stroke="#ffffff" stroke-width="0.36"><tspan x="0" y="-5.12">Data</tspan><tspan x="0" y="17.07">Center Growth</tspan></text><text transform="translate(1062.82,492.41) rotate(-29.75)" font-size="9.24" fill="#ffffff" stroke="#ffffff" stroke-width="0.18"><tspan x="0" y="-2.62">Microsoft</tspan><tspan x="0" y="8.72">Cloud Migration</tspan></text><text transform="translate(1058.33,473.14) rotate(-31.70)" font-size="5.29" fill="#444444" stroke="#444444" stroke-width="0.11"><tspan x="0" y="-1.50">Enterprise</tspan><tspan x="0" y="4.99">Workflow Optimization</tspan></text><text transform="translate(1059.56,457.85) rotate(-32.95)" font-size="4.30" fill="#444444" stroke="#444444" stroke-width="0.09"><tspan x="0" y="-1.22">Cloud and</tspan><tspan x="0" y="4.06">Enterprise Synergy</tspan></text><text transform="translate(778.89,532.14) rotate(0.00)" font-size="25.44" fill="#ffffff" stroke="#ffffff" stroke-width="0.51"><tspan x="0" y="-7.20">Financial</tspan><tspan x="0" y="24.00">Performance</tspan></text><text transform="translate(999.58,455.23) rotate(-36.80)" font-size="18.13" fill="#ffffff" stroke="#ffffff" stroke-width="0.36"><tspan x="0" y="-5.13">Apple</tspan><tspan x="0" y="17.10">Revenue Growth</tspan></text><text transform="translate(965.31,418.60) rotate(-42.35)" font-size="17.56" fill="#ffffff" stroke="#ffffff" stroke-width="0.35"><tspan x="0" y="-4.97">Revenue</tspan><tspan x="0" y="16.56">Growth Dynamics</tspan></text><text transform="translate(936.25,380.12) rotate(-47.62)" font-size="16.60" fill="#ffffff" stroke="#ffffff" stroke-width="0.33"><tspan x="0" y="-4.70">Advertising</tspan><tspan x="0" y="15.66">Revenue Outlook</tspan></text><text transform="translate(896.26,359.71) rotate(-52.48)" font-size="14.61" fill="#ffffff" stroke="#ffffff" stroke-width="0.29"><tspan x="0" y="-4.14">Financial</tspan><tspan x="0" y="13.78">Performance Overview</tspan></text><text transform="translate(873.45,322.35) rotate(-56.90)" font-size="14.24" fill="#444444" stroke="#444444" stroke-width="0.28"><tspan x="0" y="-4.03">Gross</tspan><tspan x="0" y="13.43">Margin Dynamics</tspan></text><text transform="translate(853.57,291.90) rotate(-60.40)" font-size="10.11" fill="#444444" stroke="#444444" stroke-width="0.20"><tspan x="0" y="-2.86">2024</tspan><tspan x="0" y="9.54">Financial Outlook</tspan></text><text transform="translate(832.31,275.99) rotate(-63.15)" font-size="9.90" fill="#444444" stroke="#444444" stroke-width="0.20"><tspan x="0" y="-2.80">Shareholder</tspan><tspan x="0" y="9.34">Returns Outlook</tspan></text><text transform="translate(820.64,257.91) rotate(-65.05)" font-size="4.21" fill="#444444" stroke="#444444" stroke-width="0.08"><tspan x="0" y="-1.19">Quarterly</tspan><tspan x="0" y="3.97">Apple Financial Overview</tspan></text><text transform="translate(819.70,239.65) rotate(-65.90)" font-size="2.43" fill="#444444" stroke="#444444" stroke-width="0.05"><tspan x="0" y="-0.69">Dividends</tspan><tspan x="0" y="2.30">and Buybacks</tspan></text><text transform="translate(630.71,459.96) rotate(0.00)" font-size="25.44" fill="#ffffff" stroke="#ffffff" stroke-width="0.51"><tspan x="0" y="-7.20">Market</tspan><tspan x="0" y="24.00">Strategies</tspan></text><text transform="translate(733.51,303.26) rotate(-72.12)" font-size="21.99" fill="#ffffff" stroke="#ffffff" stroke-width="0.44"><tspan x="0" y="-6.23">Financial</tspan><tspan x="0" y="20.74">Performance Metrics</tspan></text><text transform="translate(657.43,285.21) rotate(-81.35)" font-size="17.50" fill="#ffffff" stroke="#ffffff" stroke-width="0.35"><tspan x="0" y="-4.96">AI-Driven</tspan><tspan x="0" y="16.51">Engagement Monetization</tspan></text><text transform="translate(614.69,234.78) rotate(-86.73)" font-size="12.50" fill="#ffffff" stroke="#ffffff" stroke-width="0.25"><tspan x="0" y="-3.54">Capital</tspan><tspan x="0" y="11.79">Expenditure Trends</tspan></text><text transform="translate(581.75,235.38) rotate(89.73)" font-size="11.74" fill="#ffffff" stroke="#ffffff" stroke-width="0.23"><tspan x="0" y="-3.33">Capital Investment in</tspan><tspan x="0" y="11.07">AI and Metaverse</tspan></text><text transform="translate(555.23,211.16) rotate(87.00)" font-size="7.52" fill="#ffffff" stroke="#ffffff" stroke-width="0.15"><tspan x="0" y="-2.13">Cloud Investment</tspan><tspan x="0" y="7.09">and Efficiency</tspan></text><text transform="translate(538.98,202.62) rotate(85.40)" font-size="4.67" fill="#444444" stroke="#444444" stroke-width="0.09"><tspan x="0" y="-1.32">Capital Investment</tspan><tspan x="0" y="4.41">in AI</tspan></text><text transform="translate(529.11,192.74) rotate(84.50)" font-size="2.43" fill="#444444" stroke="#444444" stroke-width="0.05"><tspan x="0" y="-0.69">Investment and</tspan><tspan x="0" y="2.29">Market Growth</tspan></text><text transform="translate(483.09,493.38) rotate(69.62)" font-size="25.44" fill="#ffffff" stroke="#ffffff" stroke-width="0.51"><tspan x="0" y="-7.20">AI</tspan><tspan x="0" y="24.00">Technologies</tspan></text><text transform="translate(461.42,295.84) rotate(75.35)" font-size="25.44" fill="#ffffff" stroke="#ffffff" stroke-width="0.51"><tspan x="0" y="-7.20">NVIDIA&#x27;s</tspan><tspan x="0" y="24.00">AI Architecture</tspan></text><text transform="translate(353.81,274.42) rotate(64.88)" font-size="15.22" fill="#ffffff" stroke="#ffffff" stroke-width="0.30"><tspan x="0" y="-4.31">Generative</tspan><tspan x="0" y="14.35">AI Solutions</tspan></text><text transform="translate(317.62,283.31) rotate(61.08)" font-size="12.40" fill="#ffffff" stroke="#ffffff" stroke-width="0.25"><tspan x="0" y="-3.51">AI-Driven</tspan><tspan x="0" y="11.69">Productivity</tspan></text><text transform="translate(290.58,283.77) rotate(58.65)" font-size="5.83" fill="#ffffff" stroke="#ffffff" stroke-width="0.12"><tspan x="0" y="-1.65">AI</tspan><tspan x="0" y="5.50">in Smartphones</tspan></text><text transform="translate(277.50,285.25) rotate(57.45)" font-size="3.57" fill="#ffffff" stroke="#ffffff" stroke-width="0.07"><tspan x="0" y="-1.01">Large</tspan><tspan x="0" y="3.37">Language Models</tspan></text><text transform="translate(267.92,283.33) rotate(56.75)" font-size="2.03" fill="#444444" stroke="#444444" stroke-width="0.04"><tspan x="0" y="-0.58">AI</tspan><tspan x="0" y="1.92">Model Training</tspan></text><text transform="translate(366.60,573.13) rotate(41.52)" font-size="25.44" fill="#ffffff" stroke="#ffffff" stroke-width="0.51"><tspan x="0" y="-7.20">Collaboration</tspan><tspan x="0" y="24.00">and Growth</tspan></text><text transform="translate(268.28,371.10) rotate(51.33)" font-size="25.44" fill="#ffffff" stroke="#ffffff" stroke-width="0.51"><tspan x="0" y="-7.20">AI Integration</tspan><tspan x="0" y="24.00">in Business</tspan></text><text transform="translate(207.87,410.55) rotate(43.35)" font-size="24.21" fill="#ffffff" stroke="#ffffff" stroke-width="0.48"><tspan x="0" y="-6.86">User-Centric</tspan><tspan x="0" y="22.83">Innovations</tspan></text><text transform="translate(162.29,439.73) rotate(37.70)" font-size="13.09" fill="#ffffff" stroke="#ffffff" stroke-width="0.26"><tspan x="0" y="-3.71">AI</tspan><tspan x="0" y="12.34">Search Innovation</tspan></text><text transform="translate(136.54,463.03) rotate(34.08)" font-size="12.24" fill="#ffffff" stroke="#ffffff" stroke-width="0.24"><tspan x="0" y="-3.47">Apple</tspan><tspan x="0" y="11.54">Services Growth</tspan></text><text transform="translate(115.02,480.85) rotate(31.27)" font-size="7.88" fill="#444444" stroke="#444444" stroke-width="0.16"><tspan x="0" y="-2.23">Gaming</tspan><tspan x="0" y="7.43">Subscription Growth</tspan></text><text transform="translate(90.71,486.64) rotate(29.50)" font-size="5.49" fill="#444444" stroke="#444444" stroke-width="0.11"><tspan x="0" y="-1.56">Microsoft</tspan><tspan x="0" y="5.18">Azure Growth</tspan></text><text transform="translate(79.35,491.74) rotate(28.50)" font-size="2.42" fill="#444444" stroke="#444444" stroke-width="0.05"><tspan x="0" y="-0.68">Collaboration</tspan><tspan x="0" y="2.28">and Opportunities</tspan></text><text transform="translate(74.35,494.75) rotate(28.00)" font-size="1.63" fill="#444444" stroke="#444444" stroke-width="0.03"><tspan x="0" y="-0.46">Microsoft Copilot</tspan><tspan x="0" y="1.54">Opportunity</tspan></text><text transform="translate(301.40,696.81) rotate(13.73)" font-size="25.44" fill="#ffffff" stroke="#ffffff" stroke-width="0.51"><tspan x="0" y="-7.20">Market Dynamics</tspan><tspan x="0" y="24.00">and Trends</tspan></text><text transform="translate(128.05,598.48) rotate(20.15)" font-size="25.44" fill="#ffffff" stroke="#ffffff" stroke-width="0.51"><tspan x="0" y="-7.20">Market</tspan><tspan x="0" y="24.00">Dynamics Inquiry</tspan></text><text transform="translate(64.41,680.30) rotate(9.35)" font-size="23.17" fill="#ffffff" stroke="#ffffff" stroke-width="0.46"><tspan x="0" y="-6.56">Connected</tspan><tspan x="0" y="21.85">TV Growth</tspan></text><text transform="translate(65.01,733.23) rotate(3.60)" font-size="14.99" fill="#ffffff" stroke="#ffffff" stroke-width="0.30"><tspan x="0" y="-4.25">Google</tspan><tspan x="0" y="14.14">Advertising Growth</tspan></text><text transform="translate(3.86,754.25) rotate(1.15)" font-size="1.23" fill="#ffffff" stroke="#ffffff" stroke-width="0.02"><tspan x="0" y="-0.35">Market</tspan><tspan x="0" y="1.16">Share Gains</tspan></text><text transform="translate(300.12,828.77) rotate(-12.48)" font-size="25.44" fill="#ffffff" stroke="#ffffff" stroke-width="0.51"><tspan x="0" y="-7.20">AI</tspan><tspan x="0" y="24.00">and Technology</tspan></text><text transform="translate(102.36,829.56) rotate(-7.52)" font-size="21.15" fill="#ffffff" stroke="#ffffff" stroke-width="0.42"><tspan x="0" y="-5.99">AI and</tspan><tspan x="0" y="19.95">Product Development</tspan></text><text transform="translate(75.00,916.28) rotate(-16.45)" font-size="9.89" fill="#ffffff" stroke="#ffffff" stroke-width="0.20"><tspan x="0" y="-2.80">AI</tspan><tspan x="0" y="9.33">Infrastructure Investment</tspan></text><text transform="translate(78.49,942.04) rotate(-19.20)" font-size="9.03" fill="#ffffff" stroke="#ffffff" stroke-width="0.18"><tspan x="0" y="-2.56">AI</tspan><tspan x="0" y="8.52">Infrastructure Leadership</tspan></text><text transform="translate(58.34,972.55) rotate(-21.45)" font-size="7.40" fill="#444444" stroke="#444444" stroke-width="0.15"><tspan x="0" y="-2.10">Automotive</tspan><tspan x="0" y="6.98">AI Growth</tspan></text><text transform="translate(66.50,985.69) rotate(-23.00)" font-size="4.63" fill="#444444" stroke="#444444" stroke-width="0.09"><tspan x="0" y="-1.31">Generative AI in</tspan><tspan x="0" y="4.37">Healthcare &amp; Beyond</tspan></text><text transform="translate(62.01,997.35) rotate(-23.90)" font-size="2.39" fill="#444444" stroke="#444444" stroke-width="0.05"><tspan x="0" y="-0.68">AI</tspan><tspan x="0" y="2.25">Ecosystem Monetization</tspan></text><text transform="translate(353.35,943.12) rotate(-37.50)" font-size="25.44" fill="#ffffff" stroke="#ffffff" stroke-width="0.51"><tspan x="0" y="-7.20">Product and</tspan><tspan x="0" y="24.00">User Experience</tspan></text><text transform="translate(162.49,1007.47) rotate(-29.80)" font-size="22.73" fill="#ffffff" stroke="#ffffff" stroke-width="0.45"><tspan x="0" y="-6.44">iPhone Performance</tspan><tspan x="0" y="21.44">in China</tspan></text><text transform="translate(196.02,1075.31) rotate(-38.55)" font-size="22.52" fill="#ffffff" stroke="#ffffff" stroke-width="0.45"><tspan x="0" y="-6.38">User Experience</tspan><tspan x="0" y="21.24">and AI Integration</tspan></text><text transform="translate(222.46,1126.48) rotate(-44.90)" font-size="15.62" fill="#ffffff" stroke="#ffffff" stroke-width="0.31"><tspan x="0" y="-4.42">Apple</tspan><tspan x="0" y="14.73">Customer Satisfaction</tspan></text><text transform="translate(203.61,1186.48) rotate(-47.85)" font-size="3.53" fill="#ffffff" stroke="#ffffff" stroke-width="0.07"><tspan x="0" y="-1.00">iPhone</tspan><tspan x="0" y="3.33">Revenue Performance</tspan></text><text transform="translate(202.25,1199.25) rotate(-48.60)" font-size="2.44" fill="#444444" stroke="#444444" stroke-width="0.05"><tspan x="0" y="-0.69">Vision Pro</tspan><tspan x="0" y="2.31">Momentum</tspan></text><text transform="translate(439.25,1018.67) rotate(-60.15)" font-size="20.74" fill="#ffffff" stroke="#ffffff" stroke-width="0.41"><tspan x="0" y="-5.87">AI</tspan><tspan x="0" y="19.56">Business Applications</tspan></text><text transform="translate(295.22,1160.15) rotate(-53.75)" font-size="20.55" fill="#ffffff" stroke="#ffffff" stroke-width="0.41"><tspan x="0" y="-5.82">Automated</tspan><tspan x="0" y="19.38">Advertising Solutions</tspan></text><text transform="translate(325.94,1221.16) rotate(-60.43)" font-size="20.01" fill="#ffffff" stroke="#ffffff" stroke-width="0.40"><tspan x="0" y="-5.67">AI</tspan><tspan x="0" y="18.87">in Advertising</tspan></text><text transform="translate(350.50,1262.75) rotate(-64.80)" font-size="9.90" fill="#ffffff" stroke="#ffffff" stroke-width="0.20"><tspan x="0" y="-2.80">AI-Enhanced</tspan><tspan x="0" y="9.34">Hiring Solutions</tspan></text><text transform="translate(372.90,1269.41) rotate(-67.23)" font-size="7.79" fill="#444444" stroke="#444444" stroke-width="0.16"><tspan x="0" y="-2.21">AI</tspan><tspan x="0" y="7.35">Network Infrastructure</tspan></text><text transform="translate(385.46,1290.72) rotate(-69.25)" font-size="7.29" fill="#444444" stroke="#444444" stroke-width="0.15"><tspan x="0" y="-2.07">AI</tspan><tspan x="0" y="6.88">Model Scaling</tspan></text><text transform="translate(528.36,1063.39) rotate(-79.35)" font-size="25.44" fill="#ffffff" stroke="#ffffff" stroke-width="0.51"><tspan x="0" y="-7.20">Technological</tspan><tspan x="0" y="24.00">Innovations</tspan></text><text transform="translate(441.06,1257.33) rotate(-73.75)" font-size="22.32" fill="#ffffff" stroke="#ffffff" stroke-width="0.45"><tspan x="0" y="-6.32">Microsoft</tspan><tspan x="0" y="21.05">365 Innovation</tspan></text><text transform="translate(473.88,1306.24) rotate(-78.45)" font-size="8.51" fill="#ffffff" stroke="#ffffff" stroke-width="0.17"><tspan x="0" y="-2.41">Gemini</tspan><tspan x="0" y="8.03">AI Advancements</tspan></text><text transform="translate(495.64,1304.34) rotate(-80.65)" font-size="7.60" fill="#ffffff" stroke="#ffffff" stroke-width="0.15"><tspan x="0" y="-2.15">Transition to</tspan><tspan x="0" y="7.17">Accelerated Computing</tspan></text><text transform="translate(514.29,1312.39) rotate(-82.70)" font-size="7.39" fill="#ffffff" stroke="#ffffff" stroke-width="0.15"><tspan x="0" y="-2.09">Mixed</tspan><tspan x="0" y="6.97">Reality Technologies</tspan></text><text transform="translate(528.25,1332.44) rotate(-84.35)" font-size="5.14" fill="#444444" stroke="#444444" stroke-width="0.10"><tspan x="0" y="-1.46">AI-Enhanced</tspan><tspan x="0" y="4.85">Eyewear</tspan></text><text transform="translate(541.17,1332.85) rotate(-85.65)" font-size="5.13" fill="#444444" stroke="#444444" stroke-width="0.10"><tspan x="0" y="-1.45">Cybersecurity</tspan><tspan x="0" y="4.84">Innovation</tspan></text><text transform="translate(554.57,1323.80) rotate(-86.95)" font-size="4.94" fill="#444444" stroke="#444444" stroke-width="0.10"><tspan x="0" y="-1.40">Waymo</tspan><tspan x="0" y="4.66">Autonomous Expansion</tspan></text><text transform="translate(562.04,1345.30) rotate(-87.80)" font-size="1.64" fill="#444444" stroke="#444444" stroke-width="0.03"><tspan x="0" y="-0.46">Quantum</tspan><tspan x="0" y="1.55">Computing</tspan></text><text transform="translate(621.82,1054.80) rotate(82.60)" font-size="23.20" fill="#ffffff" stroke="#ffffff" stroke-width="0.46"><tspan x="0" y="-6.57">Financial Strategies</tspan><tspan x="0" y="21.88">and Performance</tspan></text><text transform="translate(586.89,1306.02) rotate(89.73)" font-size="12.57" fill="#ffffff" stroke="#ffffff" stroke-width="0.25"><tspan x="0" y="-3.56">Revenue</tspan><tspan x="0" y="11.85">Growth Outlook</tspan></text><text transform="translate(617.22,1304.21) rotate(86.50)" font-size="10.23" fill="#ffffff" stroke="#ffffff" stroke-width="0.20"><tspan x="0" y="-2.90">Investor</tspan><tspan x="0" y="9.65">Relations Highlights</tspan></text><text transform="translate(642.81,1304.45) rotate(83.80)" font-size="8.90" fill="#ffffff" stroke="#ffffff" stroke-width="0.18"><tspan x="0" y="-2.52">Earnings</tspan><tspan x="0" y="8.40">Presentation Protocols</tspan></text><text transform="translate(666.85,1313.37) rotate(81.42)" font-size="8.40" fill="#ffffff" stroke="#ffffff" stroke-width="0.17"><tspan x="0" y="-2.38">Ad</tspan><tspan x="0" y="7.92">Revenue Growth</tspan></text><text transform="translate(686.56,1301.95) rotate(79.20)" font-size="7.96" fill="#444444" stroke="#444444" stroke-width="0.16"><tspan x="0" y="-2.25">Financial</tspan><tspan x="0" y="7.51">Conference Highlights</tspan></text><text transform="translate(708.03,1301.83) rotate(77.00)" font-size="8.10" fill="#444444" stroke="#444444" stroke-width="0.16"><tspan x="0" y="-2.29">Apple&#x27;s</tspan><tspan x="0" y="7.64">Financial Strategies</tspan></text><text transform="translate(728.99,1309.68) rotate(75.10)" font-size="6.18" fill="#444444" stroke="#444444" stroke-width="0.12"><tspan x="0" y="-1.75">Revenue</tspan><tspan x="0" y="5.83">Impact Analysis</tspan></text><text transform="translate(743.04,1325.02) rotate(74.15)" font-size="1.24" fill="#444444" stroke="#444444" stroke-width="0.02"><tspan x="0" y="-0.35">Margin</tspan><tspan x="0" y="1.17">Guidance</tspan></text><text transform="translate(711.21,1060.58) rotate(66.70)" font-size="25.31" fill="#ffffff" stroke="#ffffff" stroke-width="0.51"><tspan x="0" y="-7.17">Investment</tspan><tspan x="0" y="23.87">and Strategy</tspan></text><text transform="translate(752.47,1271.45) rotate(71.60)" font-size="14.43" fill="#ffffff" stroke="#ffffff" stroke-width="0.29"><tspan x="0" y="-4.09">Sovereign</tspan><tspan x="0" y="13.61">AI Development</tspan></text><text transform="translate(787.99,1262.56) rotate(67.70)" font-size="12.57" fill="#ffffff" stroke="#ffffff" stroke-width="0.25"><tspan x="0" y="-3.56">Long-Term</tspan><tspan x="0" y="11.86">Investment Focus</tspan></text><text transform="translate(817.48,1254.76) rotate(64.50)" font-size="9.97" fill="#ffffff" stroke="#ffffff" stroke-width="0.20"><tspan x="0" y="-2.82">Cost</tspan><tspan x="0" y="9.40">Base Reengineering</tspan></text><text transform="translate(845.93,1261.08) rotate(62.15)" font-size="7.26" fill="#444444" stroke="#444444" stroke-width="0.15"><tspan x="0" y="-2.06">Ad Innovations</tspan><tspan x="0" y="6.85">in Search</tspan></text><text transform="translate(862.11,1255.92) rotate(60.45)" font-size="5.80" fill="#444444" stroke="#444444" stroke-width="0.12"><tspan x="0" y="-1.64">Q&amp;A</tspan><tspan x="0" y="5.47">Session Protocol</tspan></text><text transform="translate(771.96,1018.13) rotate(53.35)" font-size="21.74" fill="#ffffff" stroke="#ffffff" stroke-width="0.43"><tspan x="0" y="-6.16">Communication</tspan><tspan x="0" y="20.51">and Reporting</tspan></text><text transform="translate(871.78,1232.27) rotate(58.35)" font-size="9.85" fill="#ffffff" stroke="#ffffff" stroke-width="0.20"><tspan x="0" y="-2.79">Earnings</tspan><tspan x="0" y="9.29">Conference Calls</tspan></text><text transform="translate(901.35,1232.42) rotate(55.80)" font-size="9.31" fill="#ffffff" stroke="#ffffff" stroke-width="0.19"><tspan x="0" y="-2.64">Analyst</tspan><tspan x="0" y="8.78">Questions</tspan></text><text transform="translate(916.56,1216.16) rotate(53.58)" font-size="7.82" fill="#ffffff" stroke="#ffffff" stroke-width="0.16"><tspan x="0" y="-2.22">Investor</tspan><tspan x="0" y="7.38">Q&amp;A Sessions</tspan></text><text transform="translate(929.87,1203.86) rotate(51.73)" font-size="6.26" fill="#ffffff" stroke="#ffffff" stroke-width="0.13"><tspan x="0" y="-1.77">Post-Call</tspan><tspan x="0" y="5.90">Replay Information</tspan></text><text transform="translate(948.16,1204.17) rotate(50.30)" font-size="4.75" fill="#ffffff" stroke="#ffffff" stroke-width="0.10"><tspan x="0" y="-1.35">Questions</tspan><tspan x="0" y="4.48">from Analysts</tspan></text><text transform="translate(957.45,1199.73) rotate(49.30)" font-size="3.20" fill="#444444" stroke="#444444" stroke-width="0.06"><tspan x="0" y="-0.91">Investor</tspan><tspan x="0" y="3.01">Communications</tspan></text><text transform="translate(965.68,1198.49) rotate(48.60)" font-size="2.44" fill="#444444" stroke="#444444" stroke-width="0.05"><tspan x="0" y="-0.69">Earnings Call</tspan><tspan x="0" y="2.30">Introductions</tspan></text><text transform="translate(969.14,1193.68) rotate(48.02)" font-size="2.22" fill="#444444" stroke="#444444" stroke-width="0.04"><tspan x="0" y="-0.63">Forward-Looking</tspan><tspan x="0" y="2.10">Statements</tspan></text><text transform="translate(975.37,1193.05) rotate(47.52)" font-size="1.84" fill="#444444" stroke="#444444" stroke-width="0.04"><tspan x="0" y="-0.52">Operator</tspan><tspan x="0" y="1.74">Instructions</tspan></text><text transform="translate(827.69,979.35) rotate(41.25)" font-size="21.20" fill="#ffffff" stroke="#ffffff" stroke-width="0.42"><tspan x="0" y="-6.00">Corporate</tspan><tspan x="0" y="19.99">Developments</tspan></text><text transform="translate(958.86,1143.74) rotate(45.25)" font-size="11.99" fill="#ffffff" stroke="#ffffff" stroke-width="0.24"><tspan x="0" y="-3.39">NVIDIA</tspan><tspan x="0" y="11.31">Gaming Innovations</tspan></text><text transform="translate(983.59,1131.15) rotate(42.45)" font-size="7.46" fill="#ffffff" stroke="#ffffff" stroke-width="0.15"><tspan x="0" y="-2.11">Microsoft</tspan><tspan x="0" y="7.04">Commercial Commitments</tspan></text><text transform="translate(1003.30,1121.87) rotate(40.35)" font-size="7.72" fill="#ffffff" stroke="#ffffff" stroke-width="0.15"><tspan x="0" y="-2.19">Apple Entertainment</tspan><tspan x="0" y="7.28">and Sports</tspan></text><text transform="translate(1023.88,1113.06) rotate(38.30)" font-size="7.65" fill="#444444" stroke="#444444" stroke-width="0.15"><tspan x="0" y="-2.17">Apple</tspan><tspan x="0" y="7.21">Earnings Calls</tspan></text><text transform="translate(1041.55,1107.65) rotate(36.77)" font-size="4.17" fill="#444444" stroke="#444444" stroke-width="0.08"><tspan x="0" y="-1.18">Alphabet</tspan><tspan x="0" y="3.94">Earnings Calls</tspan></text><text transform="translate(1048.37,1101.52) rotate(35.88)" font-size="3.00" fill="#444444" stroke="#444444" stroke-width="0.06"><tspan x="0" y="-0.85">Efficiency</tspan><tspan x="0" y="2.83">and Prioritization</tspan></text><text transform="translate(864.90,932.34) rotate(30.68)" font-size="18.10" fill="#ffffff" stroke="#ffffff" stroke-width="0.36"><tspan x="0" y="-5.13">Regulatory</tspan><tspan x="0" y="17.07">and Compliance</tspan></text><text transform="translate(1029.99,1060.90) rotate(33.50)" font-size="13.84" fill="#ffffff" stroke="#ffffff" stroke-width="0.28"><tspan x="0" y="-3.92">Financial</tspan><tspan x="0" y="13.06">Risk Disclosures</tspan></text><text transform="translate(1062.93,1051.22) rotate(30.80)" font-size="5.29" fill="#ffffff" stroke="#ffffff" stroke-width="0.11"><tspan x="0" y="-1.50">Hiring and</tspan><tspan x="0" y="4.99">Regulatory Compliance</tspan></text><text transform="translate(1075.80,1043.98) rotate(29.50)" font-size="4.67" fill="#ffffff" stroke="#ffffff" stroke-width="0.09"><tspan x="0" y="-1.32">U.S.</tspan><tspan x="0" y="4.40">Export Regulations</tspan></text><text transform="translate(1081.75,1033.75) rotate(28.30)" font-size="4.67" fill="#ffffff" stroke="#ffffff" stroke-width="0.09"><tspan x="0" y="-1.32">Environmental and</tspan><tspan x="0" y="4.41">Racial Equity</tspan></text><text transform="translate(1089.72,1025.65) rotate(27.20)" font-size="3.94" fill="#ffffff" stroke="#ffffff" stroke-width="0.08"><tspan x="0" y="-1.12">Regulatory Impact</tspan><tspan x="0" y="3.72">on Revenues</tspan></text><text transform="translate(1103.62,1025.39) rotate(26.55)" font-size="1.23" fill="#444444" stroke="#444444" stroke-width="0.02"><tspan x="0" y="-0.35">Legal</tspan><tspan x="0" y="1.16">Proceedings</tspan></text><text transform="translate(896.03,893.12) rotate(22.20)" font-size="14.75" fill="#ffffff" stroke="#ffffff" stroke-width="0.29"><tspan x="0" y="-4.18">AI Development</tspan><tspan x="0" y="13.91">and Innovation</tspan></text><text transform="translate(1083.20,990.90) rotate(24.27)" font-size="11.47" fill="#ffffff" stroke="#ffffff" stroke-width="0.23"><tspan x="0" y="-3.25">AI-Driven</tspan><tspan x="0" y="10.82">Data Platforms</tspan></text><text transform="translate(1101.46,970.66) rotate(21.60)" font-size="8.29" fill="#ffffff" stroke="#ffffff" stroke-width="0.17"><tspan x="0" y="-2.35">Personalized</tspan><tspan x="0" y="7.82">AI Engagement</tspan></text><text transform="translate(1126.11,965.78) rotate(20.25)" font-size="2.04" fill="#ffffff" stroke="#ffffff" stroke-width="0.04"><tspan x="0" y="-0.58">Meta AI</tspan><tspan x="0" y="1.92">Usage Growth</tspan></text><text transform="translate(1129.47,962.17) rotate(19.80)" font-size="1.64" fill="#ffffff" stroke="#ffffff" stroke-width="0.03"><tspan x="0" y="-0.46">AI Research</tspan><tspan x="0" y="1.55">Investments</tspan></text><text transform="translate(1131.41,959.10) rotate(19.45)" font-size="1.23" fill="#ffffff" stroke="#ffffff" stroke-width="0.02"><tspan x="0" y="-0.35">Llama</tspan><tspan x="0" y="1.16">Development</tspan></text><text transform="translate(909.07,853.68) rotate(15.12)" font-size="13.81" fill="#ffffff" stroke="#ffffff" stroke-width="0.28"><tspan x="0" y="-3.91">Innovation</tspan><tspan x="0" y="13.02">and Collaboration</tspan></text><text transform="translate(1106.26,927.72) rotate(17.23)" font-size="9.62" fill="#ffffff" stroke="#ffffff" stroke-width="0.19"><tspan x="0" y="-2.72">Open</tspan><tspan x="0" y="9.07">Source Innovation</tspan></text><text transform="translate(1106.03,903.26) rotate(14.75)" font-size="8.12" fill="#ffffff" stroke="#ffffff" stroke-width="0.16"><tspan x="0" y="-2.30">AI</tspan><tspan x="0" y="7.66">Innovation Responsibility</tspan></text><text transform="translate(1140.25,895.78) rotate(13.15)" font-size="3.58" fill="#ffffff" stroke="#ffffff" stroke-width="0.07"><tspan x="0" y="-1.01">Global Supply</tspan><tspan x="0" y="3.38">Chain Resilience</tspan></text><text transform="translate(1150.52,891.43) rotate(12.50)" font-size="1.64" fill="#444444" stroke="#444444" stroke-width="0.03"><tspan x="0" y="-0.47">Partner</tspan><tspan x="0" y="1.55">Ecosystem</tspan></text><text transform="translate(932.65,821.70) rotate(9.10)" font-size="11.68" fill="#ffffff" stroke="#ffffff" stroke-width="0.23"><tspan x="0" y="-3.31">Market Trends</tspan><tspan x="0" y="11.02">and Insights</tspan></text><text transform="translate(1126.93,866.47) rotate(10.50)" font-size="8.90" fill="#ffffff" stroke="#ffffff" stroke-width="0.18"><tspan x="0" y="-2.52">Google Cloud</tspan><tspan x="0" y="8.39">Revenue Growth</tspan></text><text transform="translate(1144.20,851.08) rotate(8.65)" font-size="5.09" fill="#ffffff" stroke="#ffffff" stroke-width="0.10"><tspan x="0" y="-1.44">Macroeconomic</tspan><tspan x="0" y="4.80">Challenges</tspan></text><text transform="translate(1145.46,838.78) rotate(7.40)" font-size="4.69" fill="#ffffff" stroke="#ffffff" stroke-width="0.09"><tspan x="0" y="-1.33">Subscription and</tspan><tspan x="0" y="4.42">Hardware Growth</tspan></text><text transform="translate(933.01,794.57) rotate(4.70)" font-size="7.93" fill="#ffffff" stroke="#ffffff" stroke-width="0.16"><tspan x="0" y="-2.25">Consumer Engagement</tspan><tspan x="0" y="7.48">and Advertising</tspan></text><text transform="translate(1141.20,822.47) rotate(5.80)" font-size="5.35" fill="#ffffff" stroke="#ffffff" stroke-width="0.11"><tspan x="0" y="-1.51">AI</tspan><tspan x="0" y="5.04">Business Interactions</tspan></text><text transform="translate(1157.65,815.05) rotate(4.90)" font-size="1.62" fill="#ffffff" stroke="#ffffff" stroke-width="0.03"><tspan x="0" y="-0.46">Reels</tspan><tspan x="0" y="1.52">Monetization Efficiency</tspan></text><text transform="translate(1162.73,811.68) rotate(4.52)" font-size="1.44" fill="#ffffff" stroke="#ffffff" stroke-width="0.03"><tspan x="0" y="-0.41">Messaging</tspan><tspan x="0" y="1.36">in Business</tspan></text><text transform="translate(1161.32,808.27) rotate(4.20)" font-size="1.23" fill="#444444" stroke="#444444" stroke-width="0.02"><tspan x="0" y="-0.35">Video</tspan><tspan x="0" y="1.16">Engagement Trends</tspan></text><text transform="translate(1161.61,805.26) rotate(3.90)" font-size="1.23" fill="#444444" stroke="#444444" stroke-width="0.02"><tspan x="0" y="-0.35">Retail</tspan><tspan x="0" y="1.16">Advertiser Strength</tspan></text><text transform="translate(947.28,775.98) rotate(1.59)" font-size="6.26" fill="#ffffff" stroke="#ffffff" stroke-width="0.13"><tspan x="0" y="-1.77">Corporate and</tspan><tspan x="0" y="5.91">Leadership Insights</tspan></text><text transform="translate(1149.42,788.84) rotate(2.32)" font-size="4.49" fill="#ffffff" stroke="#ffffff" stroke-width="0.09"><tspan x="0" y="-1.27">Activision</tspan><tspan x="0" y="4.23">Acquisition Impact</tspan></text><text transform="translate(1164.70,781.86) rotate(1.57)" font-size="1.44" fill="#ffffff" stroke="#ffffff" stroke-width="0.03"><tspan x="0" y="-0.41">CFO</tspan><tspan x="0" y="1.36">Transition</tspan></text><text transform="translate(1164.98,778.57) rotate(1.25)" font-size="1.24" fill="#ffffff" stroke="#ffffff" stroke-width="0.02"><tspan x="0" y="-0.35">Leadership</tspan><tspan x="0" y="1.17">Changes</tspan></text></g>
<g font-family="'Liberation Serif', serif" text-anchor="middle" font-weight="bold" font-size="30" fill="#2a3f5f"><text x="584" y="757">Tech Earnings</text><text x="584" y="789">Calls</text></g>
</svg>
  <div class="links"><span>json</span><span>html</span></div>
  <div class="vl" style="left:1168px;width:2px;background:#dedede"></div>
  <div class="vl" style="left:1170px;width:26px;background:#f8f8f9"></div>
  <div class="vl" style="left:1196px;width:2px;background:#e5e5e8"></div>

  <div class="btn" style="left:2206px">
    <svg width="52" height="52" viewBox="0 0 52 52" fill="none" stroke="#7c7c7c" stroke-width="2.4" stroke-linejoin="round">
      <path d="M21.7,21.95H18.25a2,2 0 0 0 -2,2V37.45a2,2 0 0 0 2,2H33.45a2,2 0 0 0 2,-2V23.95a2,2 0 0 0 -2,-2H30.2"/><path d="M25.9,31.1V13.4"/><path d="M21.8,17.5L25.9,13.4L30,17.5" stroke-linejoin="miter"/>
    </svg>
  </div>
  <div class="btn" style="left:2294px">
    <svg width="52" height="52" viewBox="0 0 52 52" fill="none" stroke="#7c7c7c" stroke-width="2.4" stroke-linejoin="round">
      <path d="M22.45,17.96L23.16,14.04L28.84,14.04L29.55,17.96L31.11,18.86L34.85,17.51L37.70,22.43L34.65,25.00L34.65,26.80L37.70,29.37L34.85,34.29L31.11,32.94L29.55,33.84L28.84,37.76L23.16,37.76L22.45,33.84L20.89,32.94L17.15,34.29L14.30,29.37L17.35,26.80L17.35,25.00L14.30,22.43L17.15,17.51L20.89,18.86Z"/>
      <circle cx="26.0" cy="25.9" r="4.7" fill="#7c7c7c" stroke="none"/>
    </svg>
  </div>

  <div class="search">Enter a Search Query</div>

  <div class="tabs" style="left:1226px;top:228px;width:754px">
    <div class="tab sel" style="left:8px;width:175px">ALL tickers</div>
    <div class="tab" style="left:183px;width:114px;font-size:27px;letter-spacing:-0.8px">NVDA</div>
    <div class="tab sep" style="left:297px;width:111px;font-size:27px;letter-spacing:-0.8px">MSFT</div>
    <div class="tab sep" style="left:408px;width:112px;font-size:27px;letter-spacing:-0.8px">META</div>
    <div class="tab sep" style="left:520px;width:120px;font-size:27px;letter-spacing:-0.8px">GOOG</div>
    <div class="tab sep" style="left:640px;width:106px;font-size:27px;letter-spacing:-0.8px">AAPL</div>
  </div>
  <div class="hl" style="left:1226px;top:292px;width:1001px"></div>
  <div class="band" style="left:1226px;top:294px;width:1001px;height:26px"></div>
  <div class="hl" style="left:1226px;top:320px;width:1001px"></div>

  <div class="tabs" style="left:1226px;top:354px;width:1001px;border-radius:9px 0 0 9px">
    <div class="tab sel" style="left:8px;width:256px;font-size:29.4px">ALL pub_quarters</div>
    <div class="tab" style="left:264px;width:138px;font-size:30px">2025Q3</div>
    <div class="tab sep" style="left:402px;width:138px;font-size:30px">2025Q2</div>
    <div class="tab sep" style="left:540px;width:139px;font-size:30px">2025Q1</div>
    <div class="tab sep" style="left:679px;width:138px;font-size:30px">2024Q4</div>
    <div class="tab sep" style="left:817px;width:139px;font-size:30px">2024Q3</div>
    <div class="tab sep" style="left:956px;width:138px;font-size:30px">2024Q2</div>
  </div>
  <div class="hl" style="left:1226px;top:417px;width:1001px"></div>
  <div class="band" style="left:1226px;top:419px;width:1001px;height:26px"></div>
  <div class="thumb" style="left:1228px;top:425px;width:499px;height:16px"></div>
  <div class="hl" style="left:1226px;top:445px;width:1001px"></div>

  <div class="tabs" style="left:1198px;top:507px;width:319px">
    <div class="tab sel" style="left:8px;width:170px;font-size:30px">Plot Count</div>
    <div class="tab" style="left:178px;width:133px;font-size:30px">Plot Pct</div>
  </div>
  <div class="hl" style="left:1198px;top:571px;width:1051px"></div>
  <div class="band" style="left:1198px;top:573px;width:1051px;height:26px"></div>
  <div class="hl" style="left:1198px;top:599px;width:1051px"></div>

<svg class="bars" width="1170" height="700" viewBox="1198 752 1170 700">
<rect x="1262" y="819.5" width="1104" height="1.6" fill="#ffffff"/>
<rect x="1262" y="981.5" width="1104" height="1.6" fill="#ffffff"/>
<rect x="1262" y="1143.5" width="1104" height="1.6" fill="#ffffff"/>
<rect x="1262" y="1305.5" width="1104" height="1.6" fill="#ffffff"/>
<g font-family="'Liberation Serif', serif" font-size="26.3" fill="#2a3f5f" text-anchor="end">
<text x="1254" y="828.5">2500</text>
<text x="1254" y="990.5">2000</text>
<text x="1254" y="1152.5">1500</text>
<text x="1254" y="1314.5">1000</text>
</g>
<rect x="1278.6" y="1057.0" width="176.8" height="394.6" fill="#e5ecf6"/>
<rect x="1279" y="1057.6" width="176" height="4.4" fill="#5a5558"/>
<rect x="1279" y="1062.6" width="176" height="1.8" fill="#5a5558"/>
<rect x="1279" y="1065.0" width="176" height="7.0" fill="#a099f0"/>
<rect x="1279" y="1072.8" width="176" height="23.2" fill="#a099f0"/>
<rect x="1279" y="1097.0" width="176" height="25.0" fill="#53518a"/>
<rect x="1279" y="1123.0" width="176" height="10.0" fill="#916393"/>
<rect x="1279" y="1134.0" width="176" height="7.3" fill="#fe5f8f"/>
<rect x="1279" y="1143.3" width="176" height="10.5" fill="#776600"/>
<rect x="1279" y="1155.0" width="176" height="4.0" fill="#b699a1"/>
<rect x="1279" y="1159.8" width="176" height="1.4" fill="#b699a1"/>
<rect x="1279" y="1162.0" width="176" height="3.0" fill="#ee5dfc"/>
<rect x="1279" y="1166.0" width="176" height="14.0" fill="#ee5dfc"/>
<rect x="1279" y="1181.0" width="176" height="12.0" fill="#1b66fe"/>
<rect x="1279" y="1194.0" width="176" height="42.7" fill="#1b66fe"/>
<rect x="1279" y="1237.8" width="176" height="3.2" fill="#009400"/>
<rect x="1279" y="1242.0" width="176" height="2.3" fill="#8bac7e"/>
<rect x="1279" y="1246.0" width="176" height="5.0" fill="#8bac7e"/>
<rect x="1279" y="1252.3" width="176" height="6.5" fill="#c72e1b"/>
<rect x="1279" y="1260.8" width="176" height="19.2" fill="#9b007c"/>
<rect x="1279" y="1281.0" width="176" height="45.0" fill="#9b007c"/>
<rect x="1279" y="1327.8" width="176" height="7.2" fill="#007287"/>
<rect x="1279" y="1336.0" width="176" height="9.0" fill="#007287"/>
<rect x="1279" y="1346.0" width="176" height="47.0" fill="#007287"/>
<rect x="1279" y="1394.0" width="176" height="3.0" fill="#007287"/>
<rect x="1279" y="1398.3" width="176" height="53.3" fill="#007287"/>
<rect x="1500.6" y="808.4" width="176.8" height="643.2" fill="#e5ecf6"/>
<rect x="1501" y="809.0" width="176" height="2.8" fill="#a0674f"/>
<rect x="1501" y="815.0" width="176" height="4.0" fill="#a099f0"/>
<rect x="1501" y="821.0" width="176" height="16.8" fill="#916393"/>
<rect x="1501" y="839.2" width="176" height="18.8" fill="#916393"/>
<rect x="1501" y="859.0" width="176" height="6.6" fill="#916393"/>
<rect x="1501" y="867.0" width="176" height="5.0" fill="#fe5f8f"/>
<rect x="1501" y="875.0" width="176" height="26.0" fill="#fe5f8f"/>
<rect x="1501" y="902.0" width="176" height="1.8" fill="#cc9500"/>
<rect x="1501" y="907.0" width="176" height="28.8" fill="#776600"/>
<rect x="1501" y="937.0" width="176" height="5.0" fill="#b699a1"/>
<rect x="1501" y="943.0" width="176" height="7.0" fill="#b699a1"/>
<rect x="1501" y="952.7" width="176" height="24.9" fill="#b699a1"/>
<rect x="1501" y="979.0" width="176" height="3.5" fill="#ee5dfc"/>
<rect x="1501" y="983.3" width="176" height="1.1" fill="#ee5dfc"/>
<rect x="1501" y="985.3" width="176" height="18.7" fill="#ee5dfc"/>
<rect x="1501" y="1005.0" width="176" height="1.0" fill="#25b8bd"/>
<rect x="1501" y="1007.0" width="176" height="49.0" fill="#25b8bd"/>
<rect x="1501" y="1056.8" width="176" height="1.2" fill="#25b8bd"/>
<rect x="1501" y="1059.0" width="176" height="3.3" fill="#1b66fe"/>
<rect x="1501" y="1063.6" width="176" height="1.4" fill="#1b66fe"/>
<rect x="1501" y="1066.8" width="176" height="21.2" fill="#00a4f7"/>
<rect x="1501" y="1089.0" width="176" height="30.0" fill="#00a4f7"/>
<rect x="1501" y="1120.8" width="176" height="49.2" fill="#00a4f7"/>
<rect x="1501" y="1173.0" width="176" height="16.7" fill="#009400"/>
<rect x="1501" y="1191.0" width="176" height="43.7" fill="#009400"/>
<rect x="1501" y="1237.0" width="176" height="11.0" fill="#8bac7e"/>
<rect x="1501" y="1250.0" width="176" height="15.8" fill="#8bac7e"/>
<rect x="1501" y="1267.8" width="176" height="2.9" fill="#8bac7e"/>
<rect x="1501" y="1272.0" width="176" height="9.0" fill="#c72e1b"/>
<rect x="1501" y="1282.8" width="176" height="4.0" fill="#c72e1b"/>
<rect x="1501" y="1288.0" width="176" height="30.8" fill="#c72e1b"/>
<rect x="1501" y="1320.0" width="176" height="4.4" fill="#c72e1b"/>
<rect x="1501" y="1325.8" width="176" height="4.6" fill="#9b007c"/>
<rect x="1501" y="1331.8" width="176" height="39.9" fill="#9b007c"/>
<rect x="1501" y="1372.8" width="176" height="1.2" fill="#9b007c"/>
<rect x="1501" y="1375.0" width="176" height="50.0" fill="#9b007c"/>
<rect x="1501" y="1426.2" width="176" height="1.4" fill="#a020f0"/>
<rect x="1501" y="1429.0" width="176" height="3.0" fill="#a020f0"/>
<rect x="1501" y="1433.0" width="176" height="2.7" fill="#007287"/>
<rect x="1501" y="1437.0" width="176" height="14.6" fill="#007287"/>
<rect x="1722.6" y="917.4" width="176.8" height="534.2" fill="#e5ecf6"/>
<rect x="1723" y="918.0" width="176" height="5.9" fill="#a0674f"/>
<rect x="1723" y="925.3" width="176" height="14.7" fill="#a0674f"/>
<rect x="1723" y="941.0" width="176" height="3.8" fill="#5a5558"/>
<rect x="1723" y="946.0" width="176" height="6.7" fill="#5a5558"/>
<rect x="1723" y="953.9" width="176" height="13.0" fill="#5a5558"/>
<rect x="1723" y="968.0" width="176" height="9.0" fill="#a099f0"/>
<rect x="1723" y="979.0" width="176" height="22.7" fill="#53518a"/>
<rect x="1723" y="1006.0" width="176" height="21.0" fill="#fe5f8f"/>
<rect x="1723" y="1028.3" width="176" height="1.4" fill="#fe5f8f"/>
<rect x="1723" y="1030.9" width="176" height="10.7" fill="#cc9500"/>
<rect x="1723" y="1043.0" width="176" height="30.6" fill="#cc9500"/>
<rect x="1723" y="1075.0" width="176" height="6.8" fill="#776600"/>
<rect x="1723" y="1084.0" width="176" height="12.8" fill="#b699a1"/>
<rect x="1723" y="1098.2" width="176" height="13.8" fill="#b699a1"/>
<rect x="1723" y="1114.0" width="176" height="5.0" fill="#ee5dfc"/>
<rect x="1723" y="1120.0" width="176" height="5.0" fill="#ee5dfc"/>
<rect x="1723" y="1126.0" width="176" height="17.0" fill="#ee5dfc"/>
<rect x="1723" y="1144.0" width="176" height="1.6" fill="#25b8bd"/>
<rect x="1723" y="1147.0" width="176" height="50.8" fill="#25b8bd"/>
<rect x="1723" y="1199.0" width="176" height="6.8" fill="#1b66fe"/>
<rect x="1723" y="1207.0" width="176" height="16.0" fill="#1b66fe"/>
<rect x="1723" y="1224.2" width="176" height="17.5" fill="#1b66fe"/>
<rect x="1723" y="1243.0" width="176" height="1.8" fill="#1b66fe"/>
<rect x="1723" y="1246.0" width="176" height="54.9" fill="#1b66fe"/>
<rect x="1723" y="1301.8" width="176" height="2.5" fill="#00a4f7"/>
<rect x="1723" y="1305.2" width="176" height="1.6" fill="#00a4f7"/>
<rect x="1723" y="1307.7" width="176" height="1.2" fill="#009400"/>
<rect x="1723" y="1312.3" width="176" height="2.7" fill="#8bac7e"/>
<rect x="1723" y="1318.0" width="176" height="23.9" fill="#8bac7e"/>
<rect x="1723" y="1343.0" width="176" height="108.6" fill="#8bac7e"/>
<rect x="1944.6" y="1140.6" width="176.8" height="311.0" fill="#e5ecf6"/>
<rect x="1945" y="1141.2" width="176" height="8.8" fill="#ff6f2e"/>
<rect x="1945" y="1155.3" width="176" height="6.6" fill="#cc9500"/>
<rect x="1945" y="1163.0" width="176" height="21.0" fill="#cc9500"/>
<rect x="1945" y="1185.6" width="176" height="1.0" fill="#776600"/>
<rect x="1945" y="1188.0" width="176" height="15.0" fill="#776600"/>
<rect x="1945" y="1204.0" width="176" height="1.2" fill="#b699a1"/>
<rect x="1945" y="1208.0" width="176" height="32.0" fill="#b699a1"/>
<rect x="1945" y="1241.0" width="176" height="3.0" fill="#ee5dfc"/>
<rect x="1945" y="1245.0" width="176" height="13.0" fill="#ee5dfc"/>
<rect x="1945" y="1259.4" width="176" height="3.4" fill="#ee5dfc"/>
<rect x="1945" y="1264.0" width="176" height="8.7" fill="#25b8bd"/>
<rect x="1945" y="1274.0" width="176" height="7.0" fill="#25b8bd"/>
<rect x="1945" y="1286.7" width="176" height="1.3" fill="#00a4f7"/>
<rect x="1945" y="1289.0" width="176" height="57.0" fill="#00a4f7"/>
<rect x="1945" y="1347.0" width="176" height="26.0" fill="#009400"/>
<rect x="1945" y="1374.9" width="176" height="1.9" fill="#009400"/>
<rect x="1945" y="1379.0" width="176" height="1.4" fill="#8bac7e"/>
<rect x="1945" y="1382.0" width="176" height="6.0" fill="#8bac7e"/>
<rect x="1945" y="1389.0" width="176" height="14.7" fill="#c72e1b"/>
<rect x="1945" y="1405.0" width="176" height="2.8" fill="#c72e1b"/>
<rect x="1945" y="1409.0" width="176" height="42.6" fill="#c72e1b"/>
<rect x="2166.6" y="1124.4" width="176.8" height="327.2" fill="#e5ecf6"/>
<rect x="2167" y="1125.0" width="176" height="8.7" fill="#5a5558"/>
<rect x="2167" y="1135.9" width="176" height="6.1" fill="#fe5f8f"/>
<rect x="2167" y="1142.9" width="176" height="1.1" fill="#fe5f8f"/>
<rect x="2167" y="1147.3" width="176" height="12.4" fill="#776600"/>
<rect x="2167" y="1162.0" width="176" height="14.7" fill="#b699a1"/>
<rect x="2167" y="1178.8" width="176" height="2.0" fill="#ee5dfc"/>
<rect x="2167" y="1183.0" width="176" height="20.6" fill="#ee5dfc"/>
<rect x="2167" y="1204.8" width="176" height="4.1" fill="#ee5dfc"/>
<rect x="2167" y="1209.9" width="176" height="9.0" fill="#ee5dfc"/>
<rect x="2167" y="1220.0" width="176" height="16.8" fill="#25b8bd"/>
<rect x="2167" y="1238.0" width="176" height="14.0" fill="#25b8bd"/>
<rect x="2167" y="1253.8" width="176" height="2.9" fill="#1b66fe"/>
<rect x="2167" y="1258.9" width="176" height="39.1" fill="#00a4f7"/>
<rect x="2167" y="1299.9" width="176" height="6.8" fill="#009400"/>
<rect x="2167" y="1309.8" width="176" height="105.8" fill="#009400"/>
<rect x="2167" y="1416.8" width="176" height="14.6" fill="#8bac7e"/>
<rect x="2167" y="1433.3" width="176" height="2.4" fill="#8bac7e"/>
<rect x="2167" y="1437.2" width="176" height="0.8" fill="#8bac7e"/>
<rect x="2167" y="1439.0" width="176" height="9.8" fill="#8bac7e"/>
<rect x="2167" y="1450.0" width="176" height="1.6" fill="#c72e1b"/>
</svg>

  <div class="vl" style="left:2366px;width:2px;background:#ececee"></div>
  <div class="vl" style="left:2368px;width:28px;background:#f9f9f9"></div>
  <div class="vl" style="left:2394px;width:2px;background:#efefef"></div>
  <div class="thumb" style="left:2374px;top:2px;width:16px;height:610px"></div>
</div>

</body>
</html>
